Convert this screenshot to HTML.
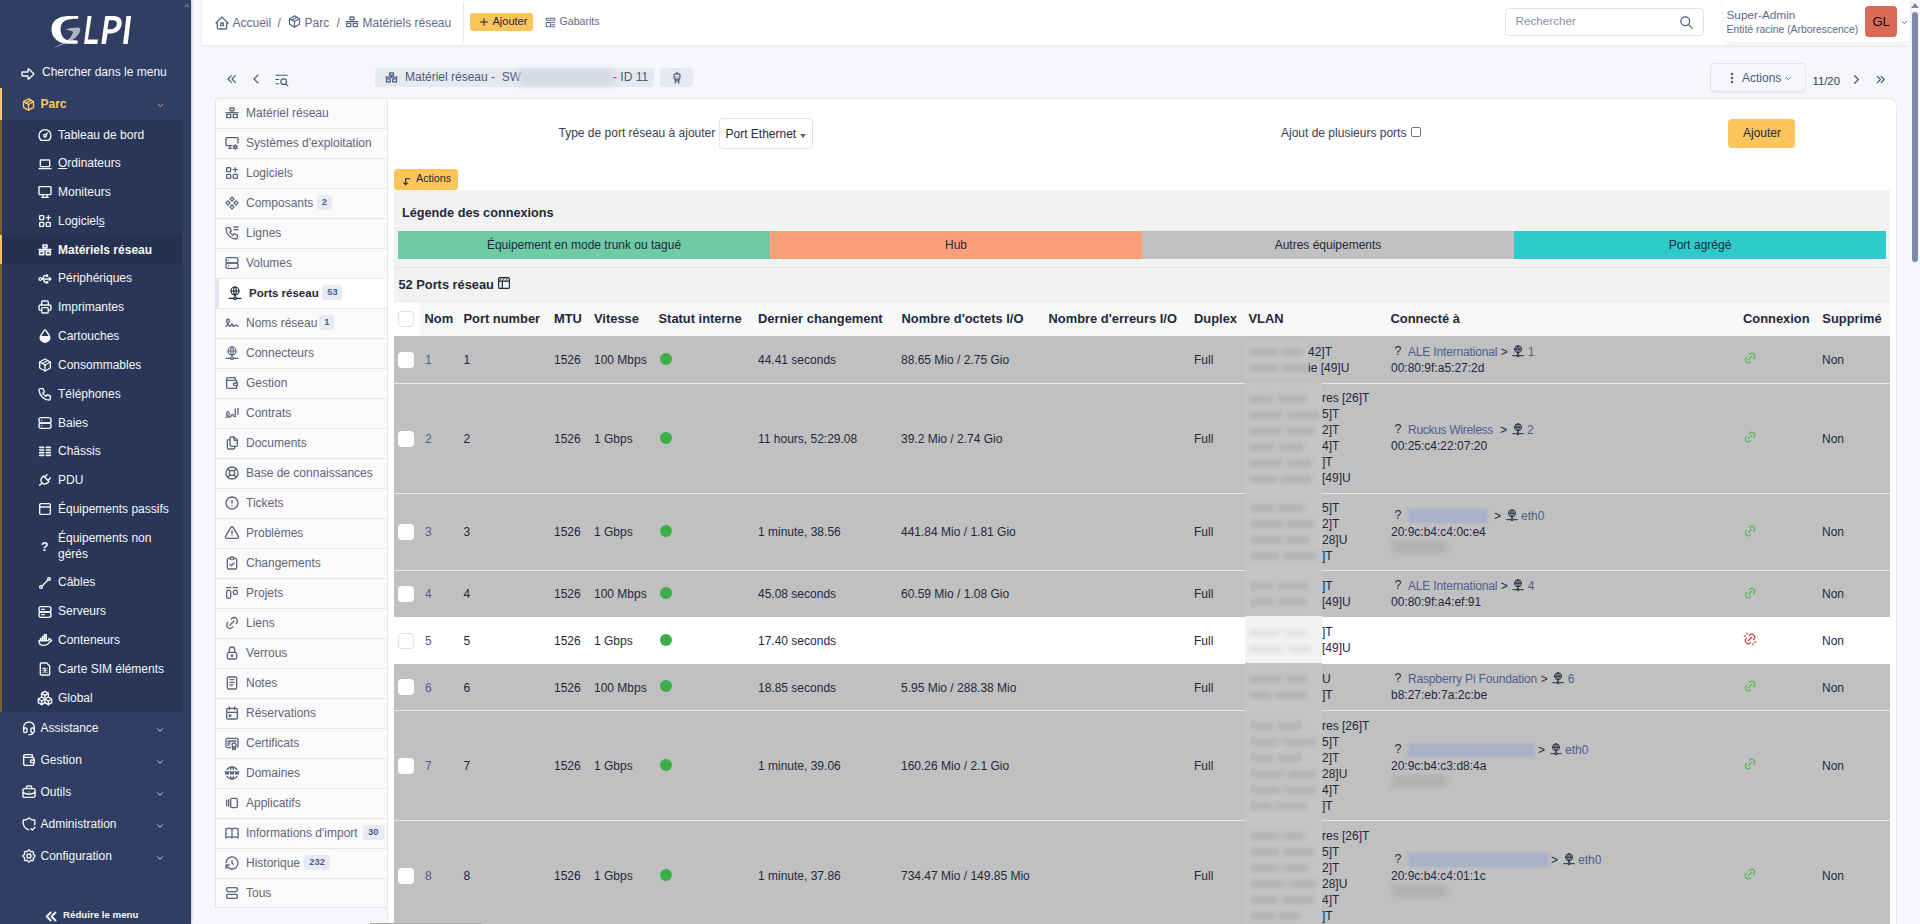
<!DOCTYPE html><html><head><meta charset="utf-8"><style>
html,body{margin:0;padding:0;width:1920px;height:924px;overflow:hidden;background:#f5f7fb;font-family:"Liberation Sans",sans-serif}
.t{position:absolute;line-height:16px;white-space:nowrap}
.r{position:absolute}
.ic{position:absolute;overflow:visible}
</style></head><body>
<div class="r" style="left:0px;top:0px;width:191px;height:924px;background:#2f3e62;box-shadow:1px 0 2px rgba(30,41,59,.22)"></div>
<svg class="ic" style="left:0;top:0;width:191px;height:60px" viewBox="0 0 191 60">
<path d="M78.2 15.9 L78.2 18.8 C74 18.9 70.5 19.1 68.6 19.4 C64.5 20.2 61.8 22.5 61 25.5 C60.2 28.5 60.3 33 62.4 36.2 C63.8 38.5 65.5 39.6 68 40.1 C70 40.4 74 40.4 77.6 40.4 L77.6 43.7 L66 43.7 C61 43.3 57 41.5 54.2 37.5 C51.2 33.5 50.5 27.5 53 23 C56 18 62 16.2 68 16 C71 15.9 75 15.9 78.2 15.9 Z" fill="#fff"/>
<path d="M64.9 29.7 C69 28.3 74.5 27.5 78.5 27.6 C80.3 28 80.6 29.8 80 31.5 C78.5 35 75 38.3 72.3 40.1 L67.8 40.1 C70 38 72.3 35 73.1 32.2 C72.5 30.8 68.5 30 64.9 29.7 Z" fill="#adb4c4"/>
<path d="M53.3 48.6 C57 46.5 61 44.5 65.5 43.4 L62.5 43.4 C59.5 44.5 56 46.5 53.3 48.6 Z" fill="#c5cad6"/>
<path d="M87.6 15.9 L91.6 15.9 L87.9 39.5 L97.9 39.5 L97.2 44 L84.1 44 Z" fill="#fff"/>
<path fill-rule="evenodd" d="M105.3 15.9 L113.5 15.9 C120 15.9 122.5 19.5 121.6 24.5 C120.6 30.5 116 33.6 109.5 33.6 L107.6 33.6 L105.9 44 L101.3 44 Z M108.9 20.2 L107.4 29.2 L110 29.2 C114 29.2 116.3 27.5 116.8 24.5 C117.3 21.5 115.5 20.2 112.5 20.2 Z" fill="#fff"/>
<path d="M126.5 15.9 L131.1 15.9 L127.7 44 L123.1 44 Z" fill="#fff"/>
</svg>
<svg class="ic" style="left:184px;top:3px;width:6px;height:4px" viewBox="0 0 6 4"><path d="M3 0L6 4H0z" fill="#5b6a8c"/></svg>
<svg class="ic" style="left:20.3px;top:65.5px;width:16px;height:16px;color:#f4f6fa" viewBox="0 0 24 24" fill="none" stroke="currentColor" stroke-width="2.1" stroke-linecap="round" stroke-linejoin="round"><path d="M4 9h8v-3.586a1 1 0 0 1 1.707 -.707l6.586 6.586a1 1 0 0 1 0 1.414l-6.586 6.586a1 1 0 0 1 -1.707 -.707v-3.586h-8a1 1 0 0 1 -1 -1v-4a1 1 0 0 1 1 -1z"/></svg>
<div class="t" style="left:42px;top:64px;font-size:12px;font-weight:400;color:#f4f6fa;">Chercher dans le menu</div>
<div class="r" style="left:0px;top:88px;width:2px;height:32px;background:#fec95c;"></div>
<svg class="ic" style="left:20.8px;top:96.8px;width:15px;height:15px;color:#fec95c" viewBox="0 0 24 24" fill="none" stroke="currentColor" stroke-width="2.2" stroke-linecap="round" stroke-linejoin="round"><path d="M12 3l8 4.5l0 9l-8 4.5l-8 -4.5l0 -9l8 -4.5"/><path d="M12 12l8 -4.5"/><path d="M12 12l0 9"/><path d="M12 12l-8 -4.5"/><path d="M16 5.25l-8 4.5"/></svg>
<div class="t" style="left:40.5px;top:96px;font-size:12px;font-weight:700;color:#fec95c;">Parc</div>
<svg class="ic" style="left:155.5px;top:100.5px;width:9px;height:9px;color:#fec95c" viewBox="0 0 24 24" fill="none" stroke="currentColor" stroke-width="2.2" stroke-linecap="round" stroke-linejoin="round"><path d="M6 9l6 6l6 -6"/></svg>
<div class="r" style="left:2px;top:120px;width:180px;height:592px;background:#2a3657;"></div>
<div class="r" style="left:0px;top:120px;width:2px;height:592px;background:#76602f;"></div>
<div class="r" style="left:2px;top:235px;width:180px;height:29px;background:#263150;"></div>
<div class="r" style="left:0px;top:235px;width:2px;height:29px;background:#f4c264;"></div>
<svg class="ic" style="left:36.5px;top:127.0px;width:16px;height:16px;color:#f4f6fa" viewBox="0 0 24 24" fill="none" stroke="currentColor" stroke-width="2.1" stroke-linecap="round" stroke-linejoin="round"><path d="M12 13m-2 0a2 2 0 1 0 4 0a2 2 0 1 0 -4 0"/><path d="M13.45 11.55l2.05 -2.05"/><path d="M6.4 20a9 9 0 1 1 11.2 0z"/></svg>
<div class="t" style="left:58px;top:127px;font-size:12px;font-weight:400;color:#f4f6fa;">Tableau de bord</div>
<svg class="ic" style="left:36.5px;top:155.7px;width:16px;height:16px;color:#f4f6fa" viewBox="0 0 24 24" fill="none" stroke="currentColor" stroke-width="2.1" stroke-linecap="round" stroke-linejoin="round"><path d="M3 19l18 0"/><path d="M5 7a1 1 0 0 1 1 -1h12a1 1 0 0 1 1 1v8a1 1 0 0 1 -1 1h-12a1 1 0 0 1 -1 -1z"/></svg>
<div class="t" style="left:58px;top:155px;font-size:12px;font-weight:400;color:#f4f6fa;"><u>O</u>rdinateurs</div>
<svg class="ic" style="left:36.5px;top:184.4px;width:16px;height:16px;color:#f4f6fa" viewBox="0 0 24 24" fill="none" stroke="currentColor" stroke-width="2.1" stroke-linecap="round" stroke-linejoin="round"><path d="M3 5a1 1 0 0 1 1 -1h16a1 1 0 0 1 1 1v10a1 1 0 0 1 -1 1h-16a1 1 0 0 1 -1 -1v-10z"/><path d="M7 20h10"/><path d="M9 16v4"/><path d="M15 16v4"/></svg>
<div class="t" style="left:58px;top:184px;font-size:12px;font-weight:400;color:#f4f6fa;">Moniteurs</div>
<svg class="ic" style="left:36.5px;top:213.1px;width:16px;height:16px;color:#f4f6fa" viewBox="0 0 24 24" fill="none" stroke="currentColor" stroke-width="2.1" stroke-linecap="round" stroke-linejoin="round"><path d="M4 5a1 1 0 0 1 1 -1h4a1 1 0 0 1 1 1v4a1 1 0 0 1 -1 1h-4a1 1 0 0 1 -1 -1z"/><path d="M4 15a1 1 0 0 1 1 -1h4a1 1 0 0 1 1 1v4a1 1 0 0 1 -1 1h-4a1 1 0 0 1 -1 -1z"/><path d="M14 15a1 1 0 0 1 1 -1h4a1 1 0 0 1 1 1v4a1 1 0 0 1 -1 1h-4a1 1 0 0 1 -1 -1z"/><path d="M14 7l6 0"/><path d="M17 4l0 6"/></svg>
<div class="t" style="left:58px;top:213px;font-size:12px;font-weight:400;color:#f4f6fa;">Logiciel<u>s</u></div>
<svg class="ic" style="left:36.5px;top:242.1px;width:16px;height:16px;color:#f4f6fa" viewBox="0 0 24 24" fill="none" stroke="currentColor" stroke-width="2.4" stroke-linecap="round" stroke-linejoin="round"><path d="M9 4.5h6v4h-6z"/><path d="M12 8.5v3"/><path d="M3 11.5h18"/><path d="M4 14h6v5h-6z"/><path d="M14 14h6v5h-6z"/></svg>
<div class="t" style="left:58px;top:242px;font-size:12px;font-weight:700;color:#f4f6fa;">Matériels réseau</div>
<svg class="ic" style="left:36.5px;top:270.8px;width:16px;height:16px;color:#f4f6fa" viewBox="0 0 24 24" fill="none" stroke="currentColor" stroke-width="2.1" stroke-linecap="round" stroke-linejoin="round"><g transform="rotate(90 12 12)"><path d="M12 19m-2 0a2 2 0 1 0 4 0a2 2 0 1 0 -4 0"/><path d="M12 17v-11.5"/><path d="M7 10v3l5 3"/><path d="M12 14.5l5 -2v-2.5"/><path d="M16 10h2v-2h-2z"/><path d="M7 9m-1 0a1 1 0 1 0 2 0a1 1 0 1 0 -2 0"/><path d="M10 5.5h4l-2 -2.5z"/></g></svg>
<div class="t" style="left:58px;top:270px;font-size:12px;font-weight:400;color:#f4f6fa;">Périphériques</div>
<svg class="ic" style="left:36.5px;top:299.4px;width:16px;height:16px;color:#f4f6fa" viewBox="0 0 24 24" fill="none" stroke="currentColor" stroke-width="2.1" stroke-linecap="round" stroke-linejoin="round"><path d="M17 17h2a2 2 0 0 0 2 -2v-4a2 2 0 0 0 -2 -2h-14a2 2 0 0 0 -2 2v4a2 2 0 0 0 2 2h2"/><path d="M17 9v-4a2 2 0 0 0 -2 -2h-6a2 2 0 0 0 -2 2v4"/><path d="M7 15a2 2 0 0 1 2 -2h6a2 2 0 0 1 2 2v4a2 2 0 0 1 -2 2h-6a2 2 0 0 1 -2 -2z"/></svg>
<div class="t" style="left:58px;top:299px;font-size:12px;font-weight:400;color:#f4f6fa;">Imprimantes</div>
<svg class="ic" style="left:36.5px;top:328.3px;width:16px;height:16px;color:#f4f6fa" viewBox="0 0 24 24" fill="none" stroke="currentColor" stroke-width="2.1" stroke-linecap="round" stroke-linejoin="round"><path d="M7.502 19.423c2.602 2.105 6.395 2.105 8.996 0c2.602 -2.105 3.262 -5.708 1.566 -8.546l-4.89 -7.26c-.42 -.625 -1.287 -.803 -1.936 -.397a1.376 1.376 0 0 0 -.41 .397l-4.893 7.26c-1.695 2.838 -1.035 6.441 1.567 8.546z"/><path d="M5.5 13h13c.3 3 -1.5 7 -6.5 7.5c-5 -.5 -6.8 -4.5 -6.5 -7.5z" fill="currentColor"/></svg>
<div class="t" style="left:58px;top:328px;font-size:12px;font-weight:400;color:#f4f6fa;">Cartouches</div>
<svg class="ic" style="left:36.5px;top:357.2px;width:16px;height:16px;color:#f4f6fa" viewBox="0 0 24 24" fill="none" stroke="currentColor" stroke-width="2.1" stroke-linecap="round" stroke-linejoin="round"><path d="M12 3l8 4.5l0 9l-8 4.5l-8 -4.5l0 -9l8 -4.5"/><path d="M12 12l8 -4.5"/><path d="M12 12l0 9"/><path d="M12 12l-8 -4.5"/><path d="M16 5.25l-8 4.5"/></svg>
<div class="t" style="left:58px;top:357px;font-size:12px;font-weight:400;color:#f4f6fa;">Consommables</div>
<svg class="ic" style="left:36.5px;top:386.1px;width:16px;height:16px;color:#f4f6fa" viewBox="0 0 24 24" fill="none" stroke="currentColor" stroke-width="2.1" stroke-linecap="round" stroke-linejoin="round"><path d="M5 4h4l2 5l-2.5 1.5a11 11 0 0 0 5 5l1.5 -2.5l5 2v4a2 2 0 0 1 -2 2a16 16 0 0 1 -15 -15a2 2 0 0 1 2 -2"/></svg>
<div class="t" style="left:58px;top:386px;font-size:12px;font-weight:400;color:#f4f6fa;">Téléphones</div>
<svg class="ic" style="left:36.5px;top:415.0px;width:16px;height:16px;color:#f4f6fa" viewBox="0 0 24 24" fill="none" stroke="currentColor" stroke-width="2.1" stroke-linecap="round" stroke-linejoin="round"><path d="M3 7a3 3 0 0 1 3 -3h12a3 3 0 0 1 3 3v2a3 3 0 0 1 -3 3h-12a3 3 0 0 1 -3 -3z"/><path d="M3 15a3 3 0 0 1 3 -3h12a3 3 0 0 1 3 3v2a3 3 0 0 1 -3 3h-12a3 3 0 0 1 -3 -3z"/><path d="M7 8l0 .01"/><path d="M7 16l0 .01"/></svg>
<div class="t" style="left:58px;top:415px;font-size:12px;font-weight:400;color:#f4f6fa;">Baies</div>
<svg class="ic" style="left:36.5px;top:443.6px;width:16px;height:16px;color:#f4f6fa" viewBox="0 0 24 24" fill="none" stroke="currentColor" stroke-width="2.1" stroke-linecap="round" stroke-linejoin="round"><path d="M4 5h6M4 9h6M4 13h6M4 17h6M14 5h6M14 9h6M14 13h6M14 17h6" stroke-width="2.5"/></svg>
<div class="t" style="left:58px;top:443px;font-size:12px;font-weight:400;color:#f4f6fa;">Châssis</div>
<svg class="ic" style="left:36.5px;top:472.4px;width:16px;height:16px;color:#f4f6fa" viewBox="0 0 24 24" fill="none" stroke="currentColor" stroke-width="2.1" stroke-linecap="round" stroke-linejoin="round"><path d="M9.785 6l8.215 8.215l-2.054 2.054a5.81 5.81 0 1 1 -8.215 -8.215l2.054 -2.054z"/><path d="M4 20l3.5 -3.5"/><path d="M15 4l-3.5 3.5"/><path d="M20 9l-3.5 3.5"/></svg>
<div class="t" style="left:58px;top:472px;font-size:12px;font-weight:400;color:#f4f6fa;">PDU</div>
<svg class="ic" style="left:36.5px;top:501.29999999999995px;width:16px;height:16px;color:#f4f6fa" viewBox="0 0 24 24" fill="none" stroke="currentColor" stroke-width="2.1" stroke-linecap="round" stroke-linejoin="round"><path d="M4 6a2 2 0 0 1 2 -2h12a2 2 0 0 1 2 2v12a2 2 0 0 1 -2 2h-12a2 2 0 0 1 -2 -2z"/><path d="M4 9h16"/></svg>
<div class="t" style="left:58px;top:501px;font-size:12px;font-weight:400;color:#f4f6fa;">Équipements passifs</div>
<div class="t" style="left:41px;top:539px;font-size:12px;font-weight:700;color:#f4f6fa;">?</div>
<div class="t" style="left:58px;top:530px;font-size:12px;font-weight:400;color:#f4f6fa;">Équipements non</div>
<div class="t" style="left:58px;top:546px;font-size:12px;font-weight:400;color:#f4f6fa;">gérés</div>
<svg class="ic" style="left:36.5px;top:574.6px;width:16px;height:16px;color:#f4f6fa" viewBox="0 0 24 24" fill="none" stroke="currentColor" stroke-width="2.1" stroke-linecap="round" stroke-linejoin="round"><path d="M6 18m-2 0a2 2 0 1 0 4 0a2 2 0 1 0 -4 0"/><path d="M18 6m-2 0a2 2 0 1 0 4 0a2 2 0 1 0 -4 0"/><path d="M7.5 16.5l9 -9"/></svg>
<div class="t" style="left:58px;top:574px;font-size:12px;font-weight:400;color:#f4f6fa;">Câbles</div>
<svg class="ic" style="left:36.5px;top:603.5px;width:16px;height:16px;color:#f4f6fa" viewBox="0 0 24 24" fill="none" stroke="currentColor" stroke-width="2.1" stroke-linecap="round" stroke-linejoin="round"><path d="M3 7a3 3 0 0 1 3 -3h12a3 3 0 0 1 3 3v2a3 3 0 0 1 -3 3h-12a3 3 0 0 1 -3 -3z"/><path d="M3 15a3 3 0 0 1 3 -3h12a3 3 0 0 1 3 3v2a3 3 0 0 1 -3 3h-12a3 3 0 0 1 -3 -3z"/><path d="M7 8h4"/><path d="M7 16h4"/></svg>
<div class="t" style="left:58px;top:603px;font-size:12px;font-weight:400;color:#f4f6fa;">Serveurs</div>
<svg class="ic" style="left:36.5px;top:632.4px;width:16px;height:16px;color:#f4f6fa" viewBox="0 0 24 24" fill="none" stroke="currentColor" stroke-width="2.1" stroke-linecap="round" stroke-linejoin="round"><path d="M22 12.54c-1.804 -.345 -2.701 -1.08 -3.523 -2.94c-.487 .696 -1.102 1.568 -.92 2.4c.028 .238 -.32 1 -.557 1h-14c0 5.208 3.164 7 6.196 7c4.124 .022 7.828 -1.376 9.854 -5c1.146 -.101 2.296 -1.505 2.95 -2.46z"/><path d="M5 10h3v3h-3z"/><path d="M8 10h3v3h-3z"/><path d="M11 10h3v3h-3z"/><path d="M8 7h3v3h-3z"/><path d="M11 7h3v3h-3z"/><path d="M11 4h3v3h-3z"/></svg>
<div class="t" style="left:58px;top:632px;font-size:12px;font-weight:400;color:#f4f6fa;">Conteneurs</div>
<svg class="ic" style="left:36.5px;top:661.3px;width:16px;height:16px;color:#f4f6fa" viewBox="0 0 24 24" fill="none" stroke="currentColor" stroke-width="2.1" stroke-linecap="round" stroke-linejoin="round"><path d="M6 3h8.5l4.5 4.5v12.5a1 1 0 0 1 -1 1h-12a1 1 0 0 1 -1 -1v-16a1 1 0 0 1 1 -1z"/><path d="M9 11h3v6"/><path d="M15 17v.01"/><path d="M15 14v.01"/><path d="M15 11v.01"/><path d="M12 14v.01"/><path d="M9 14v.01"/><path d="M9 17v.01"/></svg>
<div class="t" style="left:58px;top:661px;font-size:12px;font-weight:400;color:#f4f6fa;">Carte SIM éléments</div>
<svg class="ic" style="left:36.5px;top:690.1px;width:16px;height:16px;color:#f4f6fa" viewBox="0 0 24 24" fill="none" stroke="currentColor" stroke-width="2.1" stroke-linecap="round" stroke-linejoin="round"><path d="M7 16.5l-5 -3l5 -3l5 3v5.5l-5 3z"/><path d="M2 13.5v5.5l5 3"/><path d="M7 16.545l5 -3.03"/><path d="M17 16.5l-5 -3l5 -3l5 3v5.5l-5 3z"/><path d="M12 19l5 3"/><path d="M17 16.5l5 -3"/><path d="M12 13.5v-5.5l-5 -3l5 -3l5 3v5.5"/><path d="M7 5.03v5.455"/><path d="M12 8l5 -3"/></svg>
<div class="t" style="left:58px;top:690px;font-size:12px;font-weight:400;color:#f4f6fa;">Global</div>
<svg class="ic" style="left:20.5px;top:720.0px;width:16px;height:16px;color:#f4f6fa" viewBox="0 0 24 24" fill="none" stroke="currentColor" stroke-width="2.1" stroke-linecap="round" stroke-linejoin="round"><path d="M4 14v-3a8 8 0 1 1 16 0v3"/><path d="M18 19c0 1.657 -2.686 3 -6 3"/><path d="M4 14a2 2 0 0 1 2 -2h1a2 2 0 0 1 2 2v3a2 2 0 0 1 -2 2h-1a2 2 0 0 1 -2 -2v-3z"/><path d="M15 14a2 2 0 0 1 2 -2h1a2 2 0 0 1 2 2v3a2 2 0 0 1 -2 2h-1a2 2 0 0 1 -2 -2v-3z"/></svg>
<div class="t" style="left:40.5px;top:720px;font-size:12px;font-weight:400;color:#f4f6fa;">Assistance</div>
<svg class="ic" style="left:155.0px;top:724.5px;width:10px;height:10px;color:#f4f6fa" viewBox="0 0 24 24" fill="none" stroke="currentColor" stroke-width="2" stroke-linecap="round" stroke-linejoin="round"><path d="M6 9l6 6l6 -6"/></svg>
<svg class="ic" style="left:20.5px;top:752.0px;width:16px;height:16px;color:#f4f6fa" viewBox="0 0 24 24" fill="none" stroke="currentColor" stroke-width="2.1" stroke-linecap="round" stroke-linejoin="round"><path d="M17 8v-3a1 1 0 0 0 -1 -1h-10a2 2 0 0 0 0 4h12a1 1 0 0 1 1 1v3m0 4v3a1 1 0 0 1 -1 1h-12a2 2 0 0 1 -2 -2v-12"/><path d="M20 12v4h-4a2 2 0 0 1 0 -4h4"/></svg>
<div class="t" style="left:40.5px;top:752px;font-size:12px;font-weight:400;color:#f4f6fa;">Gestion</div>
<svg class="ic" style="left:155.0px;top:756.5px;width:10px;height:10px;color:#f4f6fa" viewBox="0 0 24 24" fill="none" stroke="currentColor" stroke-width="2" stroke-linecap="round" stroke-linejoin="round"><path d="M6 9l6 6l6 -6"/></svg>
<svg class="ic" style="left:20.5px;top:784.0px;width:16px;height:16px;color:#f4f6fa" viewBox="0 0 24 24" fill="none" stroke="currentColor" stroke-width="2.1" stroke-linecap="round" stroke-linejoin="round"><path d="M3 9a2 2 0 0 1 2 -2h14a2 2 0 0 1 2 2v9a2 2 0 0 1 -2 2h-14a2 2 0 0 1 -2 -2z"/><path d="M8 7v-2a2 2 0 0 1 2 -2h4a2 2 0 0 1 2 2v2"/><path d="M12 12l0 .01"/><path d="M3 13a20 20 0 0 0 18 0"/></svg>
<div class="t" style="left:40.5px;top:784px;font-size:12px;font-weight:400;color:#f4f6fa;">Outils</div>
<svg class="ic" style="left:155.0px;top:788.5px;width:10px;height:10px;color:#f4f6fa" viewBox="0 0 24 24" fill="none" stroke="currentColor" stroke-width="2" stroke-linecap="round" stroke-linejoin="round"><path d="M6 9l6 6l6 -6"/></svg>
<svg class="ic" style="left:20.5px;top:816.0px;width:16px;height:16px;color:#f4f6fa" viewBox="0 0 24 24" fill="none" stroke="currentColor" stroke-width="2.1" stroke-linecap="round" stroke-linejoin="round"><path d="M11.46 20.846a12 12 0 0 1 -7.96 -14.846a12 12 0 0 0 8.5 -3a12 12 0 0 0 8.5 3a12 12 0 0 1 -.09 7.06"/><path d="M15 19l2 2l4 -4"/></svg>
<div class="t" style="left:40.5px;top:816px;font-size:12px;font-weight:400;color:#f4f6fa;">Administration</div>
<svg class="ic" style="left:155.0px;top:820.5px;width:10px;height:10px;color:#f4f6fa" viewBox="0 0 24 24" fill="none" stroke="currentColor" stroke-width="2" stroke-linecap="round" stroke-linejoin="round"><path d="M6 9l6 6l6 -6"/></svg>
<svg class="ic" style="left:20.5px;top:848.0px;width:16px;height:16px;color:#f4f6fa" viewBox="0 0 24 24" fill="none" stroke="currentColor" stroke-width="2.1" stroke-linecap="round" stroke-linejoin="round"><path d="M10.325 4.317c.426 -1.756 2.924 -1.756 3.35 0a1.724 1.724 0 0 0 2.573 1.066c1.543 -.94 3.31 .826 2.37 2.37a1.724 1.724 0 0 0 1.065 2.572c1.756 .426 1.756 2.924 0 3.35a1.724 1.724 0 0 0 -1.066 2.573c.94 1.543 -.826 3.31 -2.37 2.37a1.724 1.724 0 0 0 -2.572 1.065c-.426 1.756 -2.924 1.756 -3.35 0a1.724 1.724 0 0 0 -2.573 -1.066c-1.543 .94 -3.31 -.826 -2.37 -2.37a1.724 1.724 0 0 0 -1.065 -2.572c-1.756 -.426 -1.756 -2.924 0 -3.35a1.724 1.724 0 0 0 1.066 -2.573c-.94 -1.543 .826 -3.31 2.37 -2.37c1 .608 2.296 .07 2.572 -1.065z"/><path d="M9 12a3 3 0 1 0 6 0a3 3 0 0 0 -6 0"/></svg>
<div class="t" style="left:40.5px;top:848px;font-size:12px;font-weight:400;color:#f4f6fa;">Configuration</div>
<svg class="ic" style="left:155.0px;top:852.5px;width:10px;height:10px;color:#f4f6fa" viewBox="0 0 24 24" fill="none" stroke="currentColor" stroke-width="2" stroke-linecap="round" stroke-linejoin="round"><path d="M6 9l6 6l6 -6"/></svg>
<svg class="ic" style="left:42.3px;top:906.5px;width:19px;height:19px;color:#f4f6fa" viewBox="0 0 24 24" fill="none" stroke="currentColor" stroke-width="2.4" stroke-linecap="round" stroke-linejoin="round"><path d="M11 7l-5 5l5 5"/><path d="M17 7l-5 5l5 5"/></svg>
<div class="t" style="left:63px;top:907px;font-size:9.7px;font-weight:700;color:#f4f6fa;">Réduire le menu</div>
<div class="r" style="left:202px;top:0px;width:1708px;height:45px;background:#fff;box-shadow:0 1px 3px rgba(30,41,59,.08)"></div>
<svg class="ic" style="left:213.5px;top:14.5px;width:16px;height:16px;color:#5e6a89" viewBox="0 0 24 24" fill="none" stroke="currentColor" stroke-width="2" stroke-linecap="round" stroke-linejoin="round"><path d="M5 12l-2 0l9 -9l9 9l-2 0"/><path d="M5 12v7a2 2 0 0 0 2 2h10a2 2 0 0 0 2 -2v-7"/><path d="M10 12h4v4h-4z"/></svg>
<div class="t" style="left:232.5px;top:15px;font-size:12px;font-weight:400;color:#5e6a89;">Accueil</div>
<div class="t" style="left:277.5px;top:15px;font-size:12px;font-weight:400;color:#5e6a89;">/</div>
<svg class="ic" style="left:287.0px;top:14.0px;width:15px;height:15px;color:#5e6a89" viewBox="0 0 24 24" fill="none" stroke="currentColor" stroke-width="2" stroke-linecap="round" stroke-linejoin="round"><path d="M12 3l8 4.5l0 9l-8 4.5l-8 -4.5l0 -9l8 -4.5"/><path d="M12 12l8 -4.5"/><path d="M12 12l0 9"/><path d="M12 12l-8 -4.5"/><path d="M16 5.25l-8 4.5"/></svg>
<div class="t" style="left:304.5px;top:15px;font-size:12px;font-weight:400;color:#5e6a89;">Parc</div>
<div class="t" style="left:336.5px;top:15px;font-size:12px;font-weight:400;color:#5e6a89;">/</div>
<svg class="ic" style="left:344.0px;top:13.5px;width:16px;height:16px;color:#5e6a89" viewBox="0 0 24 24" fill="none" stroke="currentColor" stroke-width="2" stroke-linecap="round" stroke-linejoin="round"><path d="M9 4.5h6v4h-6z"/><path d="M12 8.5v3"/><path d="M3 11.5h18"/><path d="M4 14h6v5h-6z"/><path d="M14 14h6v5h-6z"/></svg>
<div class="t" style="left:362.5px;top:15px;font-size:12px;font-weight:400;color:#5e6a89;">Matériels réseau</div>
<div class="r" style="left:463px;top:3px;width:1px;height:39px;background:#e5e7eb;"></div>
<div class="r" style="left:470px;top:13px;width:63px;height:18px;background:#fac55a;border-radius:3px"></div>
<svg class="ic" style="left:477.5px;top:15.8px;width:12px;height:12px;color:#1e293b" viewBox="0 0 24 24" fill="none" stroke="currentColor" stroke-width="2" stroke-linecap="round" stroke-linejoin="round"><path d="M12 5l0 14"/><path d="M5 12l14 0"/></svg>
<div class="t" style="left:492.5px;top:13px;font-size:11px;font-weight:400;color:#1e293b;">Ajouter</div>
<svg class="ic" style="left:543.5px;top:15.5px;width:13px;height:13px;color:#5e6a89" viewBox="0 0 24 24" fill="none" stroke="currentColor" stroke-width="1.9" stroke-linecap="round" stroke-linejoin="round"><path d="M4 5a1 1 0 0 1 1 -1h14a1 1 0 0 1 1 1v2a1 1 0 0 1 -1 1h-14a1 1 0 0 1 -1 -1z"/><path d="M4 13a1 1 0 0 1 1 -1h6a1 1 0 0 1 1 1v6a1 1 0 0 1 -1 1h-6a1 1 0 0 1 -1 -1z"/><path d="M14 12l6 0"/><path d="M14 16l6 0"/><path d="M14 20l6 0"/></svg>
<div class="t" style="left:559.5px;top:13px;font-size:10.6px;font-weight:400;color:#5e6a89;">Gabarits</div>
<div class="r" style="left:1505px;top:8px;width:198px;height:27px;background:#fff;border:1px solid #dfe3ea;border-radius:4px;box-sizing:border-box;width:199px;height:28px"></div>
<div class="t" style="left:1515.5px;top:13px;font-size:11.7px;font-weight:400;color:#8791a7;">Rechercher</div>
<svg class="ic" style="left:1678.5px;top:15.0px;width:15px;height:15px;color:#4a5a80" viewBox="0 0 24 24" fill="none" stroke="currentColor" stroke-width="2" stroke-linecap="round" stroke-linejoin="round"><path d="M10 10m-7 0a7 7 0 1 0 14 0a7 7 0 1 0 -14 0"/><path d="M21 21l-6 -6"/></svg>
<div class="r" style="left:1723px;top:0px;width:187px;height:42px;background:#fff;border-radius:0 0 6px 6px;box-shadow:0 1px 3px rgba(30,41,59,.10)"></div>
<div class="t" style="left:1726.5px;top:7px;font-size:11.8px;font-weight:400;color:#5e6a89;">Super-Admin</div>
<div class="t" style="left:1726.5px;top:22px;font-size:10.4px;font-weight:400;color:#5e6a89;">Entité racine (Arborescence)</div>
<div class="r" style="left:1865px;top:6px;width:32px;height:31px;background:#da6a58;border-radius:4px"></div>
<div class="t" style="left:1872.5px;top:14px;font-size:13px;font-weight:400;color:#0d0d0d;">GL</div>
<svg class="ic" style="left:1899.5px;top:18.0px;width:9px;height:9px;color:#5e6a89" viewBox="0 0 24 24" fill="none" stroke="currentColor" stroke-width="2.6" stroke-linecap="round" stroke-linejoin="round"><path d="M6 9l6 6l6 -6"/></svg>
<svg class="ic" style="left:1910px;top:2px;width:10px;height:7px" viewBox="0 0 10 7"><path d="M5 1L9 6H1z" fill="#7a88a6"/></svg>
<div class="r" style="left:1912px;top:12px;width:6px;height:250px;background:#7d8aa7;border-radius:3px"></div>
<svg class="ic" style="left:223.5px;top:71.3px;width:16px;height:16px;color:#4a5a80" viewBox="0 0 24 24" fill="none" stroke="currentColor" stroke-width="1.7" stroke-linecap="round" stroke-linejoin="round"><path d="M11 7l-5 5l5 5"/><path d="M17 7l-5 5l5 5"/></svg>
<svg class="ic" style="left:248.3px;top:71.3px;width:16px;height:16px;color:#4a5a80" viewBox="0 0 24 24" fill="none" stroke="currentColor" stroke-width="1.7" stroke-linecap="round" stroke-linejoin="round"><path d="M15 6l-6 6l6 6"/></svg>
<svg class="ic" style="left:272.8px;top:70.8px;width:17px;height:17px;color:#4a5a80" viewBox="0 0 24 24" fill="none" stroke="currentColor" stroke-width="1.7" stroke-linecap="round" stroke-linejoin="round"><path d="M15 15m-4 0a4 4 0 1 0 8 0a4 4 0 1 0 -8 0"/><path d="M18.5 18.5l2.5 2.5"/><path d="M4 6h16"/><path d="M4 12h4"/><path d="M4 18h4"/></svg>
<div class="r" style="left:375px;top:68px;width:279px;height:19px;background:#e6e9f0;border-radius:4px"></div>
<svg class="ic" style="left:384.0px;top:69.5px;width:15px;height:15px;color:#4a5a80" viewBox="0 0 24 24" fill="none" stroke="currentColor" stroke-width="2" stroke-linecap="round" stroke-linejoin="round"><path d="M9 4.5h6v4h-6z"/><path d="M12 8.5v3"/><path d="M3 11.5h18"/><path d="M4 14h6v5h-6z"/><path d="M14 14h6v5h-6z"/></svg>
<div class="t" style="left:405px;top:69px;font-size:12px;font-weight:400;color:#4a5a80;">Matériel réseau -&nbsp;&nbsp;SW</div>
<div class="r" style="left:519px;top:69px;width:94px;height:17px;background:#d6dae4;filter:blur(3px)"></div>
<div class="t" style="left:613px;top:69px;font-size:12px;font-weight:400;color:#4a5a80;">- ID 11</div>
<div class="r" style="left:660px;top:68px;width:33px;height:19px;background:#e6e9f0;border-radius:4px"></div>
<svg class="ic" style="left:669.5px;top:70.5px;width:14px;height:14px;color:#4a5a80" viewBox="0 0 24 24" fill="none" stroke="currentColor" stroke-width="2" stroke-linecap="round" stroke-linejoin="round"><path d="M7 7a2 2 0 0 1 2 -2h6a2 2 0 0 1 2 2v5a2 2 0 0 1 -2 2h-6a2 2 0 0 1 -2 -2z"/><path d="M10 10h.01"/><path d="M14 10h.01"/><path d="M12 2v3"/><path d="M9 14v7"/><path d="M15 14v7"/><path d="M9 17h6"/></svg>
<div class="r" style="left:1710px;top:63px;width:96px;height:29px;background:#f5f7fb;border:1px solid #e0e4ea;border-radius:4px;box-sizing:border-box;box-shadow:0 1px 1px rgba(0,0,0,.04)"></div>
<svg class="ic" style="left:1725.0px;top:70.5px;width:14px;height:14px;color:#4a5a80" viewBox="0 0 24 24" fill="none" stroke="currentColor" stroke-width="2.4" stroke-linecap="round" stroke-linejoin="round"><path d="M12 12m-1 0a1 1 0 1 0 2 0a1 1 0 1 0 -2 0"/><path d="M12 19m-1 0a1 1 0 1 0 2 0a1 1 0 1 0 -2 0"/><path d="M12 5m-1 0a1 1 0 1 0 2 0a1 1 0 1 0 -2 0"/></svg>
<div class="t" style="left:1742px;top:70px;font-size:12px;font-weight:400;color:#4a5a80;">Actions</div>
<svg class="ic" style="left:1783.5px;top:74.0px;width:9px;height:9px;color:#4a5a80" viewBox="0 0 24 24" fill="none" stroke="currentColor" stroke-width="2.2" stroke-linecap="round" stroke-linejoin="round"><path d="M6 9l6 6l6 -6"/></svg>
<div class="t" style="left:1812.5px;top:73px;font-size:11.3px;font-weight:400;color:#334155;">11/20</div>
<svg class="ic" style="left:1848.5px;top:72.0px;width:15px;height:15px;color:#4a5a80" viewBox="0 0 24 24" fill="none" stroke="currentColor" stroke-width="2" stroke-linecap="round" stroke-linejoin="round"><path d="M9 6l6 6l-6 6"/></svg>
<svg class="ic" style="left:1873.0px;top:72.0px;width:15px;height:15px;color:#4a5a80" viewBox="0 0 24 24" fill="none" stroke="currentColor" stroke-width="2" stroke-linecap="round" stroke-linejoin="round"><path d="M7 7l5 5l-5 5"/><path d="M13 7l5 5l-5 5"/></svg>
<div class="r" style="left:215px;top:98px;width:173px;height:810px;background:#fafafa;border:1px solid #e4e6eb;border-right:none;border-radius:4px 0 0 0;box-sizing:border-box"></div>
<svg class="ic" style="left:224.0px;top:105.0px;width:16px;height:16px;color:#5f6678" viewBox="0 0 24 24" fill="none" stroke="currentColor" stroke-width="2" stroke-linecap="round" stroke-linejoin="round"><path d="M9 4.5h6v4h-6z"/><path d="M12 8.5v3"/><path d="M3 11.5h18"/><path d="M4 14h6v5h-6z"/><path d="M14 14h6v5h-6z"/></svg>
<div class="t" style="left:246px;top:105px;font-size:12px;font-weight:400;color:#5f6678;">Matériel réseau</div>
<div class="r" style="left:216px;top:128px;width:172px;height:1px;background:#e4e6eb;"></div>
<svg class="ic" style="left:224.0px;top:135.0px;width:16px;height:16px;color:#5f6678" viewBox="0 0 24 24" fill="none" stroke="currentColor" stroke-width="2" stroke-linecap="round" stroke-linejoin="round"><path d="M12 16h-8a1 1 0 0 1 -1 -1v-10a1 1 0 0 1 1 -1h16a1 1 0 0 1 1 1v7"/><path d="M7 20h4"/><path d="M9 16v4"/><path d="M17 18m-2 0a2 2 0 1 0 4 0a2 2 0 1 0 -4 0"/><path d="M17 14.5v1.5"/><path d="M17 20v1.5"/><path d="M20 16.5l-1.3 .75"/><path d="M15.3 19.25l-1.3 .75"/><path d="M14 16.5l1.3 .75"/><path d="M18.7 19.25l1.3 .75"/></svg>
<div class="t" style="left:246px;top:135px;font-size:12px;font-weight:400;color:#5f6678;">Systèmes d'exploitation</div>
<div class="r" style="left:216px;top:158px;width:172px;height:1px;background:#e4e6eb;"></div>
<svg class="ic" style="left:224.0px;top:165.0px;width:16px;height:16px;color:#5f6678" viewBox="0 0 24 24" fill="none" stroke="currentColor" stroke-width="2" stroke-linecap="round" stroke-linejoin="round"><path d="M4 5a1 1 0 0 1 1 -1h4a1 1 0 0 1 1 1v4a1 1 0 0 1 -1 1h-4a1 1 0 0 1 -1 -1z"/><path d="M4 15a1 1 0 0 1 1 -1h4a1 1 0 0 1 1 1v4a1 1 0 0 1 -1 1h-4a1 1 0 0 1 -1 -1z"/><path d="M14 15a1 1 0 0 1 1 -1h4a1 1 0 0 1 1 1v4a1 1 0 0 1 -1 1h-4a1 1 0 0 1 -1 -1z"/><path d="M14 7l6 0"/><path d="M17 4l0 6"/></svg>
<div class="t" style="left:246px;top:165px;font-size:12px;font-weight:400;color:#5f6678;">Logiciels</div>
<div class="r" style="left:216px;top:188px;width:172px;height:1px;background:#e4e6eb;"></div>
<svg class="ic" style="left:224.0px;top:195.0px;width:16px;height:16px;color:#5f6678" viewBox="0 0 24 24" fill="none" stroke="currentColor" stroke-width="2" stroke-linecap="round" stroke-linejoin="round"><path d="M3 12l3 3l3 -3l-3 -3z"/><path d="M15 12l3 3l3 -3l-3 -3z"/><path d="M9 6l3 3l3 -3l-3 -3z"/><path d="M9 18l3 3l3 -3l-3 -3z"/></svg>
<div class="t" style="left:246px;top:195px;font-size:12px;font-weight:400;color:#5f6678;">Composants</div>
<div class="r" style="left:317px;top:194.5px;width:14.699999999999989px;height:15.5px;background:#e8ebf2;border-radius:3px"></div>
<div class="t" style="left:317px;top:194px;font-size:9.3px;font-weight:700;color:#4b5d8c;width:14.699999999999989px;text-align:center">2</div>
<div class="r" style="left:216px;top:218px;width:172px;height:1px;background:#e4e6eb;"></div>
<svg class="ic" style="left:224.0px;top:225.0px;width:16px;height:16px;color:#5f6678" viewBox="0 0 24 24" fill="none" stroke="currentColor" stroke-width="2" stroke-linecap="round" stroke-linejoin="round"><path d="M5 4h4l2 5l-2.5 1.5a11 11 0 0 0 5 5l1.5 -2.5l5 2v4a2 2 0 0 1 -2 2a16 16 0 0 1 -15 -15a2 2 0 0 1 2 -2"/><path d="M15 7h6"/><path d="M15 3h6"/></svg>
<div class="t" style="left:246px;top:225px;font-size:12px;font-weight:400;color:#5f6678;">Lignes</div>
<div class="r" style="left:216px;top:248px;width:172px;height:1px;background:#e4e6eb;"></div>
<svg class="ic" style="left:224.0px;top:255.0px;width:16px;height:16px;color:#5f6678" viewBox="0 0 24 24" fill="none" stroke="currentColor" stroke-width="2" stroke-linecap="round" stroke-linejoin="round"><path d="M3 7a3 3 0 0 1 3 -3h12a3 3 0 0 1 3 3v2a3 3 0 0 1 -3 3h-12a3 3 0 0 1 -3 -3z"/><path d="M3 15a3 3 0 0 1 3 -3h12a3 3 0 0 1 3 3v2a3 3 0 0 1 -3 3h-12a3 3 0 0 1 -3 -3z"/><path d="M7 8l0 .01"/><path d="M7 16l0 .01"/></svg>
<div class="t" style="left:246px;top:255px;font-size:12px;font-weight:400;color:#5f6678;">Volumes</div>
<div class="r" style="left:216px;top:278px;width:172px;height:1px;background:#e4e6eb;"></div>
<div class="r" style="left:216px;top:279px;width:171px;height:29px;background:#fff;"></div>
<div class="r" style="left:216px;top:278px;width:3px;height:31px;background:#e3e6ec;"></div>
<svg class="ic" style="left:227.0px;top:285.0px;width:16px;height:16px;color:#1e293b" viewBox="0 0 24 24" fill="none" stroke="currentColor" stroke-width="1.7" stroke-linecap="round" stroke-linejoin="round"><path d="M6 9a6 6 0 1 0 12 0a6 6 0 0 0 -12 0"/><path d="M12 3c1.333 .333 2 2.333 2 6s-.667 5.667 -2 6"/><path d="M12 3c-1.333 .333 -2 2.333 -2 6s.667 5.667 2 6"/><path d="M6 9h12"/><path d="M3 20h7"/><path d="M14 20h7"/><path d="M10 20a2 2 0 1 0 4 0a2 2 0 0 0 -4 0"/><path d="M12 15v3"/></svg>
<div class="t" style="left:249px;top:285px;font-size:11.5px;font-weight:700;color:#1e293b;">Ports réseau</div>
<div class="r" style="left:322.3px;top:284.5px;width:20.19999999999999px;height:15.5px;background:#e8ebf2;border-radius:3px"></div>
<div class="t" style="left:322.3px;top:284px;font-size:9.3px;font-weight:700;color:#4b5d8c;width:20.19999999999999px;text-align:center">53</div>
<div class="r" style="left:216px;top:308px;width:172px;height:1px;background:#e4e6eb;"></div>
<svg class="ic" style="left:224.0px;top:315.0px;width:16px;height:16px;color:#5f6678" viewBox="0 0 24 24" fill="none" stroke="currentColor" stroke-width="2" stroke-linecap="round" stroke-linejoin="round"><path d="M3 17c3.333 -3.333 5 -6 5 -8c0 -3 -1 -3 -2 -3s-2.032 1.085 -2 3c.034 2.048 1.658 4.877 2.5 6c1.5 2 2.5 2.5 3.5 1l2 -3c.333 2.667 1.333 4 3 4c.53 0 2.639 -2 3 -2c.517 0 1.517 .667 3 2"/></svg>
<div class="t" style="left:246px;top:315px;font-size:12px;font-weight:400;color:#5f6678;">Noms réseau</div>
<div class="r" style="left:319.3px;top:314.5px;width:15.099999999999966px;height:15.5px;background:#e8ebf2;border-radius:3px"></div>
<div class="t" style="left:319.3px;top:314px;font-size:9.3px;font-weight:700;color:#4b5d8c;width:15.099999999999966px;text-align:center">1</div>
<div class="r" style="left:216px;top:338px;width:172px;height:1px;background:#e4e6eb;"></div>
<svg class="ic" style="left:224.0px;top:345.0px;width:16px;height:16px;color:#5f6678" viewBox="0 0 24 24" fill="none" stroke="currentColor" stroke-width="1.7" stroke-linecap="round" stroke-linejoin="round"><path d="M6 9a6 6 0 1 0 12 0a6 6 0 0 0 -12 0"/><path d="M12 3c1.333 .333 2 2.333 2 6s-.667 5.667 -2 6"/><path d="M12 3c-1.333 .333 -2 2.333 -2 6s.667 5.667 2 6"/><path d="M6 9h12"/><path d="M3 20h7"/><path d="M14 20h7"/><path d="M10 20a2 2 0 1 0 4 0a2 2 0 0 0 -4 0"/><path d="M12 15v3"/></svg>
<div class="t" style="left:246px;top:345px;font-size:12px;font-weight:400;color:#5f6678;">Connecteurs</div>
<div class="r" style="left:216px;top:368px;width:172px;height:1px;background:#e4e6eb;"></div>
<svg class="ic" style="left:224.0px;top:375.0px;width:16px;height:16px;color:#5f6678" viewBox="0 0 24 24" fill="none" stroke="currentColor" stroke-width="2" stroke-linecap="round" stroke-linejoin="round"><path d="M17 8v-3a1 1 0 0 0 -1 -1h-10a2 2 0 0 0 0 4h12a1 1 0 0 1 1 1v3m0 4v3a1 1 0 0 1 -1 1h-12a2 2 0 0 1 -2 -2v-12"/><path d="M20 12v4h-4a2 2 0 0 1 0 -4h4"/></svg>
<div class="t" style="left:246px;top:375px;font-size:12px;font-weight:400;color:#5f6678;">Gestion</div>
<div class="r" style="left:216px;top:398px;width:172px;height:1px;background:#e4e6eb;"></div>
<svg class="ic" style="left:224.0px;top:405.0px;width:16px;height:16px;color:#5f6678" viewBox="0 0 24 24" fill="none" stroke="currentColor" stroke-width="2" stroke-linecap="round" stroke-linejoin="round"><path d="M3 19c3.333 -2 5 -4 5 -6c0 -3 -1 -3 -2 -3s-2.032 1.085 -2 3c.034 3.562 2.755 5 4.5 5c2.5 0 2.5 -4 4 -4s1.5 3 3 3h2"/><path d="M17 6v9"/><path d="M21 5v9"/></svg>
<div class="t" style="left:246px;top:405px;font-size:12px;font-weight:400;color:#5f6678;">Contrats</div>
<div class="r" style="left:216px;top:428px;width:172px;height:1px;background:#e4e6eb;"></div>
<svg class="ic" style="left:224.0px;top:435.0px;width:16px;height:16px;color:#5f6678" viewBox="0 0 24 24" fill="none" stroke="currentColor" stroke-width="2" stroke-linecap="round" stroke-linejoin="round"><path d="M15 3v4a1 1 0 0 0 1 1h4"/><path d="M18 17h-7a2 2 0 0 1 -2 -2v-10a2 2 0 0 1 2 -2h4l5 5v7a2 2 0 0 1 -2 2z"/><path d="M16 17v2a2 2 0 0 1 -2 2h-7a2 2 0 0 1 -2 -2v-10a2 2 0 0 1 2 -2h2"/></svg>
<div class="t" style="left:246px;top:435px;font-size:12px;font-weight:400;color:#5f6678;">Documents</div>
<div class="r" style="left:216px;top:458px;width:172px;height:1px;background:#e4e6eb;"></div>
<svg class="ic" style="left:224.0px;top:465.0px;width:16px;height:16px;color:#5f6678" viewBox="0 0 24 24" fill="none" stroke="currentColor" stroke-width="2" stroke-linecap="round" stroke-linejoin="round"><path d="M12 12m-4 0a4 4 0 1 0 8 0a4 4 0 1 0 -8 0"/><path d="M12 12m-9 0a9 9 0 1 0 18 0a9 9 0 1 0 -18 0"/><path d="M15 15l3.35 3.35"/><path d="M9 15l-3.35 3.35"/><path d="M5.65 5.65l3.35 3.35"/><path d="M18.35 5.65l-3.35 3.35"/></svg>
<div class="t" style="left:246px;top:465px;font-size:12px;font-weight:400;color:#5f6678;">Base de connaissances</div>
<div class="r" style="left:216px;top:488px;width:172px;height:1px;background:#e4e6eb;"></div>
<svg class="ic" style="left:224.0px;top:495.0px;width:16px;height:16px;color:#5f6678" viewBox="0 0 24 24" fill="none" stroke="currentColor" stroke-width="2" stroke-linecap="round" stroke-linejoin="round"><path d="M3 12a9 9 0 1 0 18 0a9 9 0 0 0 -18 0"/><path d="M12 8v4"/><path d="M12 16h.01"/></svg>
<div class="t" style="left:246px;top:495px;font-size:12px;font-weight:400;color:#5f6678;">Tickets</div>
<div class="r" style="left:216px;top:518px;width:172px;height:1px;background:#e4e6eb;"></div>
<svg class="ic" style="left:224.0px;top:525.0px;width:16px;height:16px;color:#5f6678" viewBox="0 0 24 24" fill="none" stroke="currentColor" stroke-width="2" stroke-linecap="round" stroke-linejoin="round"><path d="M12 9v4"/><path d="M10.363 3.591l-8.106 13.534a1.914 1.914 0 0 0 1.636 2.871h16.214a1.914 1.914 0 0 0 1.636 -2.87l-8.106 -13.536a1.914 1.914 0 0 0 -3.274 0z"/><path d="M12 16h.01"/></svg>
<div class="t" style="left:246px;top:525px;font-size:12px;font-weight:400;color:#5f6678;">Problèmes</div>
<div class="r" style="left:216px;top:548px;width:172px;height:1px;background:#e4e6eb;"></div>
<svg class="ic" style="left:224.0px;top:555.0px;width:16px;height:16px;color:#5f6678" viewBox="0 0 24 24" fill="none" stroke="currentColor" stroke-width="2" stroke-linecap="round" stroke-linejoin="round"><path d="M9 5h-2a2 2 0 0 0 -2 2v12a2 2 0 0 0 2 2h10a2 2 0 0 0 2 -2v-12a2 2 0 0 0 -2 -2h-2"/><path d="M9 5a2 2 0 0 1 2 -2h2a2 2 0 0 1 2 2v0a2 2 0 0 1 -2 2h-2a2 2 0 0 1 -2 -2z"/><path d="M9 14l2 2l4 -4"/></svg>
<div class="t" style="left:246px;top:555px;font-size:12px;font-weight:400;color:#5f6678;">Changements</div>
<div class="r" style="left:216px;top:578px;width:172px;height:1px;background:#e4e6eb;"></div>
<svg class="ic" style="left:224.0px;top:585.0px;width:16px;height:16px;color:#5f6678" viewBox="0 0 24 24" fill="none" stroke="currentColor" stroke-width="2" stroke-linecap="round" stroke-linejoin="round"><path d="M4 4l6 0"/><path d="M14 4l6 0"/><path d="M4 10a2 2 0 0 1 2 -2h2a2 2 0 0 1 2 2v8a2 2 0 0 1 -2 2h-2a2 2 0 0 1 -2 -2z"/><path d="M14 10a2 2 0 0 1 2 -2h2a2 2 0 0 1 2 2v2a2 2 0 0 1 -2 2h-2a2 2 0 0 1 -2 -2z"/></svg>
<div class="t" style="left:246px;top:585px;font-size:12px;font-weight:400;color:#5f6678;">Projets</div>
<div class="r" style="left:216px;top:608px;width:172px;height:1px;background:#e4e6eb;"></div>
<svg class="ic" style="left:224.0px;top:615.0px;width:16px;height:16px;color:#5f6678" viewBox="0 0 24 24" fill="none" stroke="currentColor" stroke-width="2" stroke-linecap="round" stroke-linejoin="round"><path d="M9 15l6 -6"/><path d="M11 6l.463 -.536a5 5 0 0 1 7.071 7.072l-.534 .464"/><path d="M13 18l-.397 .534a5.068 5.068 0 0 1 -7.127 0a4.972 4.972 0 0 1 0 -7.071l.524 -.463"/></svg>
<div class="t" style="left:246px;top:615px;font-size:12px;font-weight:400;color:#5f6678;">Liens</div>
<div class="r" style="left:216px;top:638px;width:172px;height:1px;background:#e4e6eb;"></div>
<svg class="ic" style="left:224.0px;top:645.0px;width:16px;height:16px;color:#5f6678" viewBox="0 0 24 24" fill="none" stroke="currentColor" stroke-width="2" stroke-linecap="round" stroke-linejoin="round"><path d="M5 13a2 2 0 0 1 2 -2h10a2 2 0 0 1 2 2v6a2 2 0 0 1 -2 2h-10a2 2 0 0 1 -2 -2v-6z"/><path d="M11 16a1 1 0 1 0 2 0a1 1 0 0 0 -2 0"/><path d="M8 11v-4a4 4 0 1 1 8 0v4"/></svg>
<div class="t" style="left:246px;top:645px;font-size:12px;font-weight:400;color:#5f6678;">Verrous</div>
<div class="r" style="left:216px;top:668px;width:172px;height:1px;background:#e4e6eb;"></div>
<svg class="ic" style="left:224.0px;top:675.0px;width:16px;height:16px;color:#5f6678" viewBox="0 0 24 24" fill="none" stroke="currentColor" stroke-width="2" stroke-linecap="round" stroke-linejoin="round"><path d="M5 5a2 2 0 0 1 2 -2h10a2 2 0 0 1 2 2v14a2 2 0 0 1 -2 2h-10a2 2 0 0 1 -2 -2z"/><path d="M9 7l6 0"/><path d="M9 11l6 0"/><path d="M9 15l4 0"/></svg>
<div class="t" style="left:246px;top:675px;font-size:12px;font-weight:400;color:#5f6678;">Notes</div>
<div class="r" style="left:216px;top:698px;width:172px;height:1px;background:#e4e6eb;"></div>
<svg class="ic" style="left:224.0px;top:705.0px;width:16px;height:16px;color:#5f6678" viewBox="0 0 24 24" fill="none" stroke="currentColor" stroke-width="2" stroke-linecap="round" stroke-linejoin="round"><path d="M4 7a2 2 0 0 1 2 -2h12a2 2 0 0 1 2 2v12a2 2 0 0 1 -2 2h-12a2 2 0 0 1 -2 -2z"/><path d="M16 3l0 4"/><path d="M8 3l0 4"/><path d="M4 11l16 0"/><path d="M8 15h2v2h-2z"/></svg>
<div class="t" style="left:246px;top:705px;font-size:12px;font-weight:400;color:#5f6678;">Réservations</div>
<div class="r" style="left:216px;top:728px;width:172px;height:1px;background:#e4e6eb;"></div>
<svg class="ic" style="left:224.0px;top:735.0px;width:16px;height:16px;color:#5f6678" viewBox="0 0 24 24" fill="none" stroke="currentColor" stroke-width="2" stroke-linecap="round" stroke-linejoin="round"><path d="M15 15m-3 0a3 3 0 1 0 6 0a3 3 0 1 0 -6 0"/><path d="M13 17.5v4.5l2 -1.5l2 1.5v-4.5"/><path d="M10 19h-5a2 2 0 0 1 -2 -2v-10c0 -1.1 .9 -2 2 -2h14a2 2 0 0 1 2 2v10a2 2 0 0 1 -1 1.73"/><path d="M6 9l12 0"/><path d="M6 12l3 0"/><path d="M6 15l2 0"/></svg>
<div class="t" style="left:246px;top:735px;font-size:12px;font-weight:400;color:#5f6678;">Certificats</div>
<div class="r" style="left:216px;top:758px;width:172px;height:1px;background:#e4e6eb;"></div>
<svg class="ic" style="left:224.0px;top:765.0px;width:16px;height:16px;color:#5f6678" viewBox="0 0 24 24" fill="none" stroke="currentColor" stroke-width="2" stroke-linecap="round" stroke-linejoin="round"><path d="M19.5 7a9 9 0 0 0 -7.5 -4a8.991 8.991 0 0 0 -7.484 4"/><path d="M11.5 3a16.989 16.989 0 0 0 -1.826 4"/><path d="M12.5 3a16.989 16.989 0 0 1 1.828 4"/><path d="M19.5 17a9 9 0 0 1 -7.5 4a8.991 8.991 0 0 1 -7.484 -4"/><path d="M11.5 21a16.989 16.989 0 0 1 -1.826 -4"/><path d="M12.5 21a16.989 16.989 0 0 0 1.828 -4"/><path d="M2 10l1 4l1.5 -4l1.5 4l1 -4"/><path d="M17 10l1 4l1.5 -4l1.5 4l1 -4"/><path d="M9.5 10l1 4l1.5 -4l1.5 4l1 -4"/></svg>
<div class="t" style="left:246px;top:765px;font-size:12px;font-weight:400;color:#5f6678;">Domaines</div>
<div class="r" style="left:216px;top:788px;width:172px;height:1px;background:#e4e6eb;"></div>
<svg class="ic" style="left:224.0px;top:795.0px;width:16px;height:16px;color:#5f6678" viewBox="0 0 24 24" fill="none" stroke="currentColor" stroke-width="2" stroke-linecap="round" stroke-linejoin="round"><path d="M10 7a2 2 0 0 1 2 -2h6a2 2 0 0 1 2 2v10a2 2 0 0 1 -2 2h-6a2 2 0 0 1 -2 -2z"/><path d="M7 7l0 10"/><path d="M4 8l0 8"/></svg>
<div class="t" style="left:246px;top:795px;font-size:12px;font-weight:400;color:#5f6678;">Applicatifs</div>
<div class="r" style="left:216px;top:818px;width:172px;height:1px;background:#e4e6eb;"></div>
<svg class="ic" style="left:224.0px;top:825.0px;width:16px;height:16px;color:#5f6678" viewBox="0 0 24 24" fill="none" stroke="currentColor" stroke-width="2" stroke-linecap="round" stroke-linejoin="round"><path d="M3 19a9 9 0 0 1 9 0a9 9 0 0 1 9 0"/><path d="M3 6a9 9 0 0 1 9 0a9 9 0 0 1 9 0"/><path d="M3 6l0 13"/><path d="M12 6l0 13"/><path d="M21 6l0 13"/></svg>
<div class="t" style="left:246px;top:825px;font-size:12px;font-weight:400;color:#5f6678;">Informations d'import</div>
<div class="r" style="left:362.9px;top:824.5px;width:20.80000000000001px;height:15.5px;background:#e8ebf2;border-radius:3px"></div>
<div class="t" style="left:362.9px;top:824px;font-size:9.3px;font-weight:700;color:#4b5d8c;width:20.80000000000001px;text-align:center">30</div>
<div class="r" style="left:216px;top:848px;width:172px;height:1px;background:#e4e6eb;"></div>
<svg class="ic" style="left:224.0px;top:855.0px;width:16px;height:16px;color:#5f6678" viewBox="0 0 24 24" fill="none" stroke="currentColor" stroke-width="2" stroke-linecap="round" stroke-linejoin="round"><path d="M12 8l0 4l2 2"/><path d="M3.05 11a9 9 0 1 1 .5 4m-.5 5v-5h5"/></svg>
<div class="t" style="left:246px;top:855px;font-size:12px;font-weight:400;color:#5f6678;">Historique</div>
<div class="r" style="left:304.2px;top:854.5px;width:25.80000000000001px;height:15.5px;background:#e8ebf2;border-radius:3px"></div>
<div class="t" style="left:304.2px;top:854px;font-size:9.3px;font-weight:700;color:#4b5d8c;width:25.80000000000001px;text-align:center">232</div>
<div class="r" style="left:216px;top:878px;width:172px;height:1px;background:#e4e6eb;"></div>
<svg class="ic" style="left:224.0px;top:885.0px;width:16px;height:16px;color:#5f6678" viewBox="0 0 24 24" fill="none" stroke="currentColor" stroke-width="2" stroke-linecap="round" stroke-linejoin="round"><path d="M4 6a2 2 0 0 1 2 -2h12a2 2 0 0 1 2 2v2a2 2 0 0 1 -2 2h-12a2 2 0 0 1 -2 -2z"/><path d="M4 16a2 2 0 0 1 2 -2h12a2 2 0 0 1 2 2v2a2 2 0 0 1 -2 2h-12a2 2 0 0 1 -2 -2z"/></svg>
<div class="t" style="left:246px;top:885px;font-size:12px;font-weight:400;color:#5f6678;">Tous</div>
<div class="r" style="left:387px;top:98px;width:1px;height:810px;background:#e4e6eb;"></div>
<div class="r" style="left:388px;top:99px;width:1508px;height:825px;background:#fff;border-radius:0 6px 0 0;box-shadow:0 0 0 1px #e6e8ec"></div>
<div class="t" style="left:558.5px;top:125px;font-size:12px;font-weight:400;color:#334155;">Type de port réseau à ajouter</div>
<div class="r" style="left:718.5px;top:117.5px;width:94px;height:31px;background:#fff;border:1px solid #dfe3ea;border-radius:4px;box-sizing:border-box"></div>
<div class="t" style="left:725.5px;top:126px;font-size:12px;font-weight:400;color:#1e293b;">Port Ethernet</div>
<svg class="ic" style="left:799.5px;top:134px;width:6px;height:4px" viewBox="0 0 6 4"><path d="M0 0H6L3 4z" fill="#666"/></svg>
<div class="t" style="left:1281px;top:125px;font-size:12px;font-weight:400;color:#334155;">Ajout de plusieurs ports</div>
<div class="r" style="left:1410.5px;top:126.5px;width:10px;height:10px;background:#fff;border:1px solid #767676;border-radius:2px;box-sizing:border-box"></div>
<div class="r" style="left:1728px;top:119px;width:67px;height:29px;background:#fcc55c;border-radius:4px"></div>
<div class="t" style="left:1743px;top:125px;font-size:12px;font-weight:400;color:#1e293b;">Ajouter</div>
<div class="r" style="left:394px;top:169px;width:64px;height:21px;background:#fcc55c;border-radius:3px"></div>
<svg class="ic" style="left:401.0px;top:175.5px;width:11px;height:11px;color:#1e293b" viewBox="0 0 24 24" fill="none" stroke="currentColor" stroke-width="2.4" stroke-linecap="round" stroke-linejoin="round"><path d="M19 6h-9v13"/><path d="M6 15l4 4l4 -4"/></svg>
<div class="t" style="left:416px;top:170px;font-size:10.7px;font-weight:400;color:#1e293b;">Actions</div>
<div class="r" style="left:394px;top:190px;width:1496px;height:111px;background:#f2f2f2;"></div>
<div class="t" style="left:402px;top:205px;font-size:12.7px;font-weight:700;color:#1e293b;">Légende des connexions</div>
<div class="r" style="left:398px;top:231px;width:372px;height:28px;background:#6ecba6;"></div>
<div class="t" style="left:398px;top:237px;font-size:12px;font-weight:400;color:#1e293b;width:372px;text-align:center">Équipement en mode trunk ou tagué</div>
<div class="r" style="left:770px;top:231px;width:372px;height:28px;background:#fe9f7c;"></div>
<div class="t" style="left:770px;top:237px;font-size:12px;font-weight:400;color:#1e293b;width:372px;text-align:center">Hub</div>
<div class="r" style="left:1142px;top:231px;width:372px;height:28px;background:#c0c0c0;"></div>
<div class="t" style="left:1142px;top:237px;font-size:12px;font-weight:400;color:#1e293b;width:372px;text-align:center">Autres équipements</div>
<div class="r" style="left:1514px;top:231px;width:372px;height:28px;background:#2fcbcc;"></div>
<div class="t" style="left:1514px;top:237px;font-size:12px;font-weight:400;color:#1e293b;width:372px;text-align:center">Port agrégé</div>
<div class="r" style="left:394px;top:267px;width:1496px;height:1px;background:#e3e3e3;"></div>
<div class="t" style="left:398.5px;top:277px;font-size:12.8px;font-weight:700;color:#1e293b;">52 Ports réseau</div>
<svg class="ic" style="left:498px;top:277px;width:12px;height:12px" viewBox="0 0 12 12" fill="none" stroke="#1e293b" stroke-width="1.2"><rect x="0.6" y="0.6" width="10.8" height="10.8" rx="1"/><path d="M0.6 4.2h10.8M4.3 4.2v7.2"/><path d="M1.5 3.6l2-2.6M4.5 3.6l2-2.6M7.5 3.6l2-2.6" stroke-width="0.9"/></svg>
<div class="r" style="left:394px;top:301px;width:1496px;height:1px;background:#e6e7e9;"></div>
<div class="r" style="left:394px;top:302px;width:1496px;height:34px;background:#f8f8f8;"></div>
<div class="r" style="left:394px;top:302px;width:26px;height:34px;background:#fff;"></div>
<div class="r" style="left:398px;top:311px;width:16px;height:16px;background:#fff;border:1px solid #dde1e7;border-radius:4px;box-sizing:border-box"></div>
<div class="t" style="left:424.5px;top:311px;font-size:12.9px;font-weight:700;color:#1e293b;">Nom</div>
<div class="t" style="left:463.5px;top:311px;font-size:12.9px;font-weight:700;color:#1e293b;">Port number</div>
<div class="t" style="left:554px;top:311px;font-size:12.9px;font-weight:700;color:#1e293b;">MTU</div>
<div class="t" style="left:594px;top:311px;font-size:12.9px;font-weight:700;color:#1e293b;">Vitesse</div>
<div class="t" style="left:658.5px;top:311px;font-size:12.9px;font-weight:700;color:#1e293b;">Statut interne</div>
<div class="t" style="left:758px;top:311px;font-size:12.9px;font-weight:700;color:#1e293b;">Dernier changement</div>
<div class="t" style="left:901.5px;top:311px;font-size:12.9px;font-weight:700;color:#1e293b;">Nombre d'octets I/O</div>
<div class="t" style="left:1048.5px;top:311px;font-size:12.9px;font-weight:700;color:#1e293b;">Nombre d'erreurs I/O</div>
<div class="t" style="left:1194px;top:311px;font-size:12.9px;font-weight:700;color:#1e293b;">Duplex</div>
<div class="t" style="left:1248.5px;top:311px;font-size:12.9px;font-weight:700;color:#1e293b;">VLAN</div>
<div class="t" style="left:1390.5px;top:311px;font-size:12.9px;font-weight:700;color:#1e293b;">Connecté à</div>
<div class="t" style="left:1743px;top:311px;font-size:12.9px;font-weight:700;color:#1e293b;">Connexion</div>
<div class="t" style="left:1822.3px;top:311px;font-size:12.9px;font-weight:700;color:#1e293b;">Supprimé</div>
<div class="r" style="left:394px;top:336px;width:1496px;height:47px;background:#c0c0c0;"></div>
<div class="r" style="left:398px;top:351.5px;width:16px;height:16px;background:#fff;border-radius:4px;box-sizing:border-box;"></div>
<div class="t" style="left:425px;top:352px;font-size:12px;font-weight:400;color:#4f5e8e;">1</div>
<div class="t" style="left:463.5px;top:352px;font-size:12px;font-weight:400;color:#1e293b;">1</div>
<div class="t" style="left:554px;top:352px;font-size:12px;font-weight:400;color:#1e293b;">1526</div>
<div class="t" style="left:594px;top:352px;font-size:12px;font-weight:400;color:#1e293b;">100 Mbps</div>
<div class="r" style="left:659.5px;top:352.5px;width:12px;height:12px;background:#3eae49;border-radius:50%"></div>
<div class="t" style="left:758px;top:352px;font-size:12px;font-weight:400;color:#1e293b;">44.41 seconds</div>
<div class="t" style="left:901px;top:352px;font-size:12px;font-weight:400;color:#1e293b;">88.65 Mio / 2.75 Gio</div>
<div class="t" style="left:1194px;top:352px;font-size:12px;font-weight:400;color:#1e293b;">Full</div>
<div class="t" style="left:1308px;top:344px;font-size:12px;font-weight:400;color:#1e293b;">42]T</div>
<div class="t" style="left:1308px;top:360px;font-size:12px;font-weight:400;color:#1e293b;">ie [49]U</div>
<div class="r" style="left:1245px;top:342.0px;width:63px;height:35px;background:#c5c5c5;overflow:hidden"><div class="r" style="left:5px;top:5.5px;width:27px;height:8px;background:#b3b3b3;filter:blur(2px)"></div><div class="r" style="left:36px;top:5.5px;width:22px;height:8px;background:#b3b3b3;filter:blur(2px)"></div><div class="r" style="left:5px;top:21.5px;width:28px;height:8px;background:#b3b3b3;filter:blur(2px)"></div><div class="r" style="left:37px;top:21.5px;width:30px;height:8px;background:#b3b3b3;filter:blur(2px)"></div></div>
<div class="t" style="left:1394.5px;top:343px;font-size:12.5px;font-weight:400;color:#1e293b;">?</div>
<div class="t" style="left:1408px;top:344px;font-size:12px;font-weight:400;color:#4f5e8e;letter-spacing:-0.168px">ALE International</div>
<div class="t" style="left:1500.8px;top:344px;font-size:12px;font-weight:400;color:#1e293b;">&gt;</div>
<svg class="ic" style="left:1511.3px;top:344.0px;width:14px;height:14px;color:#1e293b" viewBox="0 0 24 24" fill="none" stroke="currentColor" stroke-width="1.7" stroke-linecap="round" stroke-linejoin="round"><path d="M6 9a6 6 0 1 0 12 0a6 6 0 0 0 -12 0"/><path d="M12 3c1.333 .333 2 2.333 2 6s-.667 5.667 -2 6"/><path d="M12 3c-1.333 .333 -2 2.333 -2 6s.667 5.667 2 6"/><path d="M6 9h12"/><path d="M3 20h7"/><path d="M14 20h7"/><path d="M10 20a2 2 0 1 0 4 0a2 2 0 0 0 -4 0"/><path d="M12 15v3"/></svg>
<div class="t" style="left:1527.8px;top:344px;font-size:12px;font-weight:400;color:#4f5e8e;">1</div>
<div class="t" style="left:1391px;top:360px;font-size:12px;font-weight:400;color:#1e293b;">00:80:9f:a5:27:2d</div>
<svg class="ic" style="left:1742.5px;top:351.0px;width:14px;height:14px;color:#52b55a" viewBox="0 0 24 24" fill="none" stroke="currentColor" stroke-width="2" stroke-linecap="round" stroke-linejoin="round"><path d="M9 15l6 -6"/><path d="M11 6l.463 -.536a5 5 0 0 1 7.071 7.072l-.534 .464"/><path d="M13 18l-.397 .534a5.068 5.068 0 0 1 -7.127 0a4.972 4.972 0 0 1 0 -7.071l.524 -.463"/></svg>
<div class="t" style="left:1822px;top:352px;font-size:12px;font-weight:400;color:#1e293b;">Non</div>
<div class="r" style="left:394px;top:384px;width:1496px;height:109px;background:#c0c0c0;"></div>
<div class="r" style="left:394px;top:383px;width:1496px;height:1px;background:#e6e7e9;"></div>
<div class="r" style="left:398px;top:430.5px;width:16px;height:16px;background:#fff;border-radius:4px;box-sizing:border-box;"></div>
<div class="t" style="left:425px;top:431px;font-size:12px;font-weight:400;color:#4f5e8e;">2</div>
<div class="t" style="left:463.5px;top:431px;font-size:12px;font-weight:400;color:#1e293b;">2</div>
<div class="t" style="left:554px;top:431px;font-size:12px;font-weight:400;color:#1e293b;">1526</div>
<div class="t" style="left:594px;top:431px;font-size:12px;font-weight:400;color:#1e293b;">1 Gbps</div>
<div class="r" style="left:659.5px;top:431.5px;width:12px;height:12px;background:#3eae49;border-radius:50%"></div>
<div class="t" style="left:758px;top:431px;font-size:12px;font-weight:400;color:#1e293b;">11 hours, 52:29.08</div>
<div class="t" style="left:901px;top:431px;font-size:12px;font-weight:400;color:#1e293b;">39.2 Mio / 2.74 Gio</div>
<div class="t" style="left:1194px;top:431px;font-size:12px;font-weight:400;color:#1e293b;">Full</div>
<div class="t" style="left:1322px;top:390px;font-size:12px;font-weight:400;color:#1e293b;">res [26]T</div>
<div class="t" style="left:1322px;top:406px;font-size:12px;font-weight:400;color:#1e293b;">5]T</div>
<div class="t" style="left:1322px;top:422px;font-size:12px;font-weight:400;color:#1e293b;">2]T</div>
<div class="t" style="left:1322px;top:438px;font-size:12px;font-weight:400;color:#1e293b;">4]T</div>
<div class="t" style="left:1322px;top:454px;font-size:12px;font-weight:400;color:#1e293b;">]T</div>
<div class="t" style="left:1322px;top:470px;font-size:12px;font-weight:400;color:#1e293b;">[49]U</div>
<div class="r" style="left:1245px;top:383px;width:77px;height:110px;background:#c5c5c5;overflow:hidden"><div class="r" style="left:5px;top:11.5px;width:23px;height:8px;background:#b3b3b3;filter:blur(2px)"></div><div class="r" style="left:32px;top:11.5px;width:29px;height:8px;background:#b3b3b3;filter:blur(2px)"></div><div class="r" style="left:5px;top:27.5px;width:33px;height:8px;background:#b3b3b3;filter:blur(2px)"></div><div class="r" style="left:42px;top:27.5px;width:32px;height:8px;background:#b3b3b3;filter:blur(2px)"></div><div class="r" style="left:5px;top:43.5px;width:32px;height:8px;background:#b3b3b3;filter:blur(2px)"></div><div class="r" style="left:41px;top:43.5px;width:28px;height:8px;background:#b3b3b3;filter:blur(2px)"></div><div class="r" style="left:5px;top:59.5px;width:25px;height:8px;background:#b3b3b3;filter:blur(2px)"></div><div class="r" style="left:34px;top:59.5px;width:24px;height:8px;background:#b3b3b3;filter:blur(2px)"></div><div class="r" style="left:5px;top:75.5px;width:33px;height:8px;background:#b3b3b3;filter:blur(2px)"></div><div class="r" style="left:42px;top:75.5px;width:24px;height:8px;background:#b3b3b3;filter:blur(2px)"></div><div class="r" style="left:5px;top:91.5px;width:26px;height:8px;background:#b3b3b3;filter:blur(2px)"></div><div class="r" style="left:35px;top:91.5px;width:31px;height:8px;background:#b3b3b3;filter:blur(2px)"></div></div>
<div class="t" style="left:1394.5px;top:421px;font-size:12.5px;font-weight:400;color:#1e293b;">?</div>
<div class="t" style="left:1408px;top:422px;font-size:12px;font-weight:400;color:#4f5e8e;letter-spacing:-0.290px">Ruckus Wireless</div>
<div class="t" style="left:1500px;top:422px;font-size:12px;font-weight:400;color:#1e293b;">&gt;</div>
<svg class="ic" style="left:1510.5px;top:422.0px;width:14px;height:14px;color:#1e293b" viewBox="0 0 24 24" fill="none" stroke="currentColor" stroke-width="1.7" stroke-linecap="round" stroke-linejoin="round"><path d="M6 9a6 6 0 1 0 12 0a6 6 0 0 0 -12 0"/><path d="M12 3c1.333 .333 2 2.333 2 6s-.667 5.667 -2 6"/><path d="M12 3c-1.333 .333 -2 2.333 -2 6s.667 5.667 2 6"/><path d="M6 9h12"/><path d="M3 20h7"/><path d="M14 20h7"/><path d="M10 20a2 2 0 1 0 4 0a2 2 0 0 0 -4 0"/><path d="M12 15v3"/></svg>
<div class="t" style="left:1527px;top:422px;font-size:12px;font-weight:400;color:#4f5e8e;">2</div>
<div class="t" style="left:1391px;top:438px;font-size:12px;font-weight:400;color:#1e293b;">00:25:c4:22:07:20</div>
<svg class="ic" style="left:1742.5px;top:430.0px;width:14px;height:14px;color:#52b55a" viewBox="0 0 24 24" fill="none" stroke="currentColor" stroke-width="2" stroke-linecap="round" stroke-linejoin="round"><path d="M9 15l6 -6"/><path d="M11 6l.463 -.536a5 5 0 0 1 7.071 7.072l-.534 .464"/><path d="M13 18l-.397 .534a5.068 5.068 0 0 1 -7.127 0a4.972 4.972 0 0 1 0 -7.071l.524 -.463"/></svg>
<div class="t" style="left:1822px;top:431px;font-size:12px;font-weight:400;color:#1e293b;">Non</div>
<div class="r" style="left:394px;top:494px;width:1496px;height:76px;background:#c0c0c0;"></div>
<div class="r" style="left:394px;top:493px;width:1496px;height:1px;background:#e6e7e9;"></div>
<div class="r" style="left:398px;top:524.0px;width:16px;height:16px;background:#fff;border-radius:4px;box-sizing:border-box;"></div>
<div class="t" style="left:425px;top:524px;font-size:12px;font-weight:400;color:#4f5e8e;">3</div>
<div class="t" style="left:463.5px;top:524px;font-size:12px;font-weight:400;color:#1e293b;">3</div>
<div class="t" style="left:554px;top:524px;font-size:12px;font-weight:400;color:#1e293b;">1526</div>
<div class="t" style="left:594px;top:524px;font-size:12px;font-weight:400;color:#1e293b;">1 Gbps</div>
<div class="r" style="left:659.5px;top:525.0px;width:12px;height:12px;background:#3eae49;border-radius:50%"></div>
<div class="t" style="left:758px;top:524px;font-size:12px;font-weight:400;color:#1e293b;">1 minute, 38.56</div>
<div class="t" style="left:901px;top:524px;font-size:12px;font-weight:400;color:#1e293b;">441.84 Mio / 1.81 Gio</div>
<div class="t" style="left:1194px;top:524px;font-size:12px;font-weight:400;color:#1e293b;">Full</div>
<div class="t" style="left:1322px;top:500px;font-size:12px;font-weight:400;color:#1e293b;">5]T</div>
<div class="t" style="left:1322px;top:516px;font-size:12px;font-weight:400;color:#1e293b;">2]T</div>
<div class="t" style="left:1322px;top:532px;font-size:12px;font-weight:400;color:#1e293b;">28]U</div>
<div class="t" style="left:1322px;top:548px;font-size:12px;font-weight:400;color:#1e293b;">]T</div>
<div class="r" style="left:1245px;top:493px;width:77px;height:77px;background:#c5c5c5;overflow:hidden"><div class="r" style="left:5px;top:11.0px;width:24px;height:8px;background:#b3b3b3;filter:blur(2px)"></div><div class="r" style="left:33px;top:11.0px;width:26px;height:8px;background:#b3b3b3;filter:blur(2px)"></div><div class="r" style="left:5px;top:27.0px;width:33px;height:8px;background:#b3b3b3;filter:blur(2px)"></div><div class="r" style="left:42px;top:27.0px;width:26px;height:8px;background:#b3b3b3;filter:blur(2px)"></div><div class="r" style="left:5px;top:43.0px;width:32px;height:8px;background:#b3b3b3;filter:blur(2px)"></div><div class="r" style="left:41px;top:43.0px;width:24px;height:8px;background:#b3b3b3;filter:blur(2px)"></div><div class="r" style="left:5px;top:59.0px;width:29px;height:8px;background:#b3b3b3;filter:blur(2px)"></div><div class="r" style="left:38px;top:59.0px;width:33px;height:8px;background:#b3b3b3;filter:blur(2px)"></div></div>
<div class="t" style="left:1394.5px;top:507px;font-size:12.5px;font-weight:400;color:#1e293b;">?</div>
<div class="r" style="left:1408px;top:509px;width:80px;height:14px;background:#aab1c6;filter:blur(1.5px)"></div>
<div class="t" style="left:1494px;top:508px;font-size:12px;font-weight:400;color:#1e293b;">&gt;</div>
<svg class="ic" style="left:1504.5px;top:508.0px;width:14px;height:14px;color:#1e293b" viewBox="0 0 24 24" fill="none" stroke="currentColor" stroke-width="1.7" stroke-linecap="round" stroke-linejoin="round"><path d="M6 9a6 6 0 1 0 12 0a6 6 0 0 0 -12 0"/><path d="M12 3c1.333 .333 2 2.333 2 6s-.667 5.667 -2 6"/><path d="M12 3c-1.333 .333 -2 2.333 -2 6s.667 5.667 2 6"/><path d="M6 9h12"/><path d="M3 20h7"/><path d="M14 20h7"/><path d="M10 20a2 2 0 1 0 4 0a2 2 0 0 0 -4 0"/><path d="M12 15v3"/></svg>
<div class="t" style="left:1521px;top:508px;font-size:12px;font-weight:400;color:#4f5e8e;">eth0</div>
<div class="t" style="left:1391px;top:524px;font-size:12px;font-weight:400;color:#1e293b;">20:9c:b4:c4:0c:e4</div>
<div class="r" style="left:1392px;top:541px;width:55px;height:12px;background:#b0b0b0;filter:blur(2.5px)"></div>
<svg class="ic" style="left:1742.5px;top:523.5px;width:14px;height:14px;color:#52b55a" viewBox="0 0 24 24" fill="none" stroke="currentColor" stroke-width="2" stroke-linecap="round" stroke-linejoin="round"><path d="M9 15l6 -6"/><path d="M11 6l.463 -.536a5 5 0 0 1 7.071 7.072l-.534 .464"/><path d="M13 18l-.397 .534a5.068 5.068 0 0 1 -7.127 0a4.972 4.972 0 0 1 0 -7.071l.524 -.463"/></svg>
<div class="t" style="left:1822px;top:524px;font-size:12px;font-weight:400;color:#1e293b;">Non</div>
<div class="r" style="left:394px;top:571px;width:1496px;height:46px;background:#c0c0c0;"></div>
<div class="r" style="left:394px;top:570px;width:1496px;height:1px;background:#e6e7e9;"></div>
<div class="r" style="left:398px;top:586.0px;width:16px;height:16px;background:#fff;border-radius:4px;box-sizing:border-box;"></div>
<div class="t" style="left:425px;top:586px;font-size:12px;font-weight:400;color:#4f5e8e;">4</div>
<div class="t" style="left:463.5px;top:586px;font-size:12px;font-weight:400;color:#1e293b;">4</div>
<div class="t" style="left:554px;top:586px;font-size:12px;font-weight:400;color:#1e293b;">1526</div>
<div class="t" style="left:594px;top:586px;font-size:12px;font-weight:400;color:#1e293b;">100 Mbps</div>
<div class="r" style="left:659.5px;top:587.0px;width:12px;height:12px;background:#3eae49;border-radius:50%"></div>
<div class="t" style="left:758px;top:586px;font-size:12px;font-weight:400;color:#1e293b;">45.08 seconds</div>
<div class="t" style="left:901px;top:586px;font-size:12px;font-weight:400;color:#1e293b;">60.59 Mio / 1.08 Gio</div>
<div class="t" style="left:1194px;top:586px;font-size:12px;font-weight:400;color:#1e293b;">Full</div>
<div class="t" style="left:1322px;top:578px;font-size:12px;font-weight:400;color:#1e293b;">]T</div>
<div class="t" style="left:1322px;top:594px;font-size:12px;font-weight:400;color:#1e293b;">[49]U</div>
<div class="r" style="left:1245px;top:570px;width:77px;height:47px;background:#c5c5c5;overflow:hidden"><div class="r" style="left:5px;top:12.0px;width:23px;height:8px;background:#b3b3b3;filter:blur(2px)"></div><div class="r" style="left:32px;top:12.0px;width:31px;height:8px;background:#b3b3b3;filter:blur(2px)"></div><div class="r" style="left:5px;top:28.0px;width:24px;height:8px;background:#b3b3b3;filter:blur(2px)"></div><div class="r" style="left:33px;top:28.0px;width:28px;height:8px;background:#b3b3b3;filter:blur(2px)"></div></div>
<div class="t" style="left:1394.5px;top:577px;font-size:12.5px;font-weight:400;color:#1e293b;">?</div>
<div class="t" style="left:1408px;top:578px;font-size:12px;font-weight:400;color:#4f5e8e;letter-spacing:-0.168px">ALE International</div>
<div class="t" style="left:1500.8px;top:578px;font-size:12px;font-weight:400;color:#1e293b;">&gt;</div>
<svg class="ic" style="left:1511.3px;top:578.0px;width:14px;height:14px;color:#1e293b" viewBox="0 0 24 24" fill="none" stroke="currentColor" stroke-width="1.7" stroke-linecap="round" stroke-linejoin="round"><path d="M6 9a6 6 0 1 0 12 0a6 6 0 0 0 -12 0"/><path d="M12 3c1.333 .333 2 2.333 2 6s-.667 5.667 -2 6"/><path d="M12 3c-1.333 .333 -2 2.333 -2 6s.667 5.667 2 6"/><path d="M6 9h12"/><path d="M3 20h7"/><path d="M14 20h7"/><path d="M10 20a2 2 0 1 0 4 0a2 2 0 0 0 -4 0"/><path d="M12 15v3"/></svg>
<div class="t" style="left:1527.8px;top:578px;font-size:12px;font-weight:400;color:#4f5e8e;">4</div>
<div class="t" style="left:1391px;top:594px;font-size:12px;font-weight:400;color:#1e293b;">00:80:9f:a4:ef:91</div>
<svg class="ic" style="left:1742.5px;top:585.5px;width:14px;height:14px;color:#52b55a" viewBox="0 0 24 24" fill="none" stroke="currentColor" stroke-width="2" stroke-linecap="round" stroke-linejoin="round"><path d="M9 15l6 -6"/><path d="M11 6l.463 -.536a5 5 0 0 1 7.071 7.072l-.534 .464"/><path d="M13 18l-.397 .534a5.068 5.068 0 0 1 -7.127 0a4.972 4.972 0 0 1 0 -7.071l.524 -.463"/></svg>
<div class="t" style="left:1822px;top:586px;font-size:12px;font-weight:400;color:#1e293b;">Non</div>
<div class="r" style="left:398px;top:632.5px;width:16px;height:16px;background:#fff;border-radius:4px;box-sizing:border-box;border:1px solid #dde1e7"></div>
<div class="t" style="left:425px;top:633px;font-size:12px;font-weight:400;color:#4f5e8e;">5</div>
<div class="t" style="left:463.5px;top:633px;font-size:12px;font-weight:400;color:#1e293b;">5</div>
<div class="t" style="left:554px;top:633px;font-size:12px;font-weight:400;color:#1e293b;">1526</div>
<div class="t" style="left:594px;top:633px;font-size:12px;font-weight:400;color:#1e293b;">1 Gbps</div>
<div class="r" style="left:659.5px;top:633.5px;width:12px;height:12px;background:#3eae49;border-radius:50%"></div>
<div class="t" style="left:758px;top:633px;font-size:12px;font-weight:400;color:#1e293b;">17.40 seconds</div>
<div class="t" style="left:901px;top:633px;font-size:12px;font-weight:400;color:#1e293b;"></div>
<div class="t" style="left:1194px;top:633px;font-size:12px;font-weight:400;color:#1e293b;">Full</div>
<div class="t" style="left:1322px;top:624px;font-size:12px;font-weight:400;color:#1e293b;">]T</div>
<div class="t" style="left:1322px;top:640px;font-size:12px;font-weight:400;color:#1e293b;">[49]U</div>
<div class="r" style="left:1245px;top:616px;width:77px;height:48px;background:#f3f3f3;overflow:hidden"><div class="r" style="left:5px;top:12.5px;width:30px;height:8px;background:#e4e4e4;filter:blur(2px)"></div><div class="r" style="left:39px;top:12.5px;width:25px;height:8px;background:#e4e4e4;filter:blur(2px)"></div><div class="r" style="left:5px;top:28.5px;width:34px;height:8px;background:#e4e4e4;filter:blur(2px)"></div><div class="r" style="left:43px;top:28.5px;width:22px;height:8px;background:#e4e4e4;filter:blur(2px)"></div></div>
<svg class="ic" style="left:1742.5px;top:632.0px;width:14px;height:14px;color:#d63939" viewBox="0 0 24 24" fill="none" stroke="currentColor" stroke-width="2" stroke-linecap="round" stroke-linejoin="round"><path d="M17 22v-2"/><path d="M9 15l6 -6"/><path d="M11 6l.463 -.536a5 5 0 0 1 7.071 7.072l-.534 .464"/><path d="M13 18l-.397 .534a5.068 5.068 0 0 1 -7.127 0a4.972 4.972 0 0 1 0 -7.071l.524 -.463"/><path d="M20 17h2"/><path d="M2 7h2"/><path d="M7 2v2"/></svg>
<div class="t" style="left:1822px;top:633px;font-size:12px;font-weight:400;color:#1e293b;">Non</div>
<div class="r" style="left:394px;top:664px;width:1496px;height:46px;background:#c0c0c0;"></div>
<div class="r" style="left:398px;top:679.0px;width:16px;height:16px;background:#fff;border-radius:4px;box-sizing:border-box;"></div>
<div class="t" style="left:425px;top:680px;font-size:12px;font-weight:400;color:#4f5e8e;">6</div>
<div class="t" style="left:463.5px;top:680px;font-size:12px;font-weight:400;color:#1e293b;">6</div>
<div class="t" style="left:554px;top:680px;font-size:12px;font-weight:400;color:#1e293b;">1526</div>
<div class="t" style="left:594px;top:680px;font-size:12px;font-weight:400;color:#1e293b;">100 Mbps</div>
<div class="r" style="left:659.5px;top:680.0px;width:12px;height:12px;background:#3eae49;border-radius:50%"></div>
<div class="t" style="left:758px;top:680px;font-size:12px;font-weight:400;color:#1e293b;">18.85 seconds</div>
<div class="t" style="left:901px;top:680px;font-size:12px;font-weight:400;color:#1e293b;">5.95 Mio / 288.38 Mio</div>
<div class="t" style="left:1194px;top:680px;font-size:12px;font-weight:400;color:#1e293b;">Full</div>
<div class="t" style="left:1322px;top:671px;font-size:12px;font-weight:400;color:#1e293b;">U</div>
<div class="t" style="left:1322px;top:687px;font-size:12px;font-weight:400;color:#1e293b;">]T</div>
<div class="r" style="left:1245px;top:663px;width:77px;height:47px;background:#c5c5c5;overflow:hidden"><div class="r" style="left:5px;top:12.0px;width:32px;height:8px;background:#b3b3b3;filter:blur(2px)"></div><div class="r" style="left:41px;top:12.0px;width:21px;height:8px;background:#b3b3b3;filter:blur(2px)"></div><div class="r" style="left:5px;top:28.0px;width:22px;height:8px;background:#b3b3b3;filter:blur(2px)"></div><div class="r" style="left:31px;top:28.0px;width:31px;height:8px;background:#b3b3b3;filter:blur(2px)"></div></div>
<div class="t" style="left:1394.5px;top:670px;font-size:12.5px;font-weight:400;color:#1e293b;">?</div>
<div class="t" style="left:1408px;top:671px;font-size:12px;font-weight:400;color:#4f5e8e;letter-spacing:-0.162px">Raspberry Pi Foundation</div>
<div class="t" style="left:1540.7px;top:671px;font-size:12px;font-weight:400;color:#1e293b;">&gt;</div>
<svg class="ic" style="left:1551.2px;top:671.0px;width:14px;height:14px;color:#1e293b" viewBox="0 0 24 24" fill="none" stroke="currentColor" stroke-width="1.7" stroke-linecap="round" stroke-linejoin="round"><path d="M6 9a6 6 0 1 0 12 0a6 6 0 0 0 -12 0"/><path d="M12 3c1.333 .333 2 2.333 2 6s-.667 5.667 -2 6"/><path d="M12 3c-1.333 .333 -2 2.333 -2 6s.667 5.667 2 6"/><path d="M6 9h12"/><path d="M3 20h7"/><path d="M14 20h7"/><path d="M10 20a2 2 0 1 0 4 0a2 2 0 0 0 -4 0"/><path d="M12 15v3"/></svg>
<div class="t" style="left:1567.7px;top:671px;font-size:12px;font-weight:400;color:#4f5e8e;">6</div>
<div class="t" style="left:1391px;top:687px;font-size:12px;font-weight:400;color:#1e293b;">b8:27:eb:7a:2c:be</div>
<svg class="ic" style="left:1742.5px;top:678.5px;width:14px;height:14px;color:#52b55a" viewBox="0 0 24 24" fill="none" stroke="currentColor" stroke-width="2" stroke-linecap="round" stroke-linejoin="round"><path d="M9 15l6 -6"/><path d="M11 6l.463 -.536a5 5 0 0 1 7.071 7.072l-.534 .464"/><path d="M13 18l-.397 .534a5.068 5.068 0 0 1 -7.127 0a4.972 4.972 0 0 1 0 -7.071l.524 -.463"/></svg>
<div class="t" style="left:1822px;top:680px;font-size:12px;font-weight:400;color:#1e293b;">Non</div>
<div class="r" style="left:394px;top:711px;width:1496px;height:109px;background:#c0c0c0;"></div>
<div class="r" style="left:394px;top:710px;width:1496px;height:1px;background:#e6e7e9;"></div>
<div class="r" style="left:398px;top:757.5px;width:16px;height:16px;background:#fff;border-radius:4px;box-sizing:border-box;"></div>
<div class="t" style="left:425px;top:758px;font-size:12px;font-weight:400;color:#4f5e8e;">7</div>
<div class="t" style="left:463.5px;top:758px;font-size:12px;font-weight:400;color:#1e293b;">7</div>
<div class="t" style="left:554px;top:758px;font-size:12px;font-weight:400;color:#1e293b;">1526</div>
<div class="t" style="left:594px;top:758px;font-size:12px;font-weight:400;color:#1e293b;">1 Gbps</div>
<div class="r" style="left:659.5px;top:758.5px;width:12px;height:12px;background:#3eae49;border-radius:50%"></div>
<div class="t" style="left:758px;top:758px;font-size:12px;font-weight:400;color:#1e293b;">1 minute, 39.06</div>
<div class="t" style="left:901px;top:758px;font-size:12px;font-weight:400;color:#1e293b;">160.26 Mio / 2.1 Gio</div>
<div class="t" style="left:1194px;top:758px;font-size:12px;font-weight:400;color:#1e293b;">Full</div>
<div class="t" style="left:1322px;top:718px;font-size:12px;font-weight:400;color:#1e293b;">res [26]T</div>
<div class="t" style="left:1322px;top:734px;font-size:12px;font-weight:400;color:#1e293b;">5]T</div>
<div class="t" style="left:1322px;top:750px;font-size:12px;font-weight:400;color:#1e293b;">2]T</div>
<div class="t" style="left:1322px;top:766px;font-size:12px;font-weight:400;color:#1e293b;">28]U</div>
<div class="t" style="left:1322px;top:782px;font-size:12px;font-weight:400;color:#1e293b;">4]T</div>
<div class="t" style="left:1322px;top:798px;font-size:12px;font-weight:400;color:#1e293b;">]T</div>
<div class="r" style="left:1245px;top:710px;width:77px;height:110px;background:#c5c5c5;overflow:hidden"><div class="r" style="left:5px;top:11.5px;width:23px;height:8px;background:#b3b3b3;filter:blur(2px)"></div><div class="r" style="left:32px;top:11.5px;width:25px;height:8px;background:#b3b3b3;filter:blur(2px)"></div><div class="r" style="left:5px;top:27.5px;width:28px;height:8px;background:#b3b3b3;filter:blur(2px)"></div><div class="r" style="left:37px;top:27.5px;width:34px;height:8px;background:#b3b3b3;filter:blur(2px)"></div><div class="r" style="left:5px;top:43.5px;width:23px;height:8px;background:#b3b3b3;filter:blur(2px)"></div><div class="r" style="left:32px;top:43.5px;width:25px;height:8px;background:#b3b3b3;filter:blur(2px)"></div><div class="r" style="left:5px;top:59.5px;width:34px;height:8px;background:#b3b3b3;filter:blur(2px)"></div><div class="r" style="left:43px;top:59.5px;width:28px;height:8px;background:#b3b3b3;filter:blur(2px)"></div><div class="r" style="left:5px;top:75.5px;width:30px;height:8px;background:#b3b3b3;filter:blur(2px)"></div><div class="r" style="left:39px;top:75.5px;width:32px;height:8px;background:#b3b3b3;filter:blur(2px)"></div><div class="r" style="left:5px;top:91.5px;width:22px;height:8px;background:#b3b3b3;filter:blur(2px)"></div><div class="r" style="left:31px;top:91.5px;width:30px;height:8px;background:#b3b3b3;filter:blur(2px)"></div></div>
<div class="t" style="left:1394.5px;top:741px;font-size:12.5px;font-weight:400;color:#1e293b;">?</div>
<div class="r" style="left:1408px;top:743px;width:127px;height:14px;background:#aab1c6;filter:blur(1.5px)"></div>
<div class="t" style="left:1538px;top:742px;font-size:12px;font-weight:400;color:#1e293b;">&gt;</div>
<svg class="ic" style="left:1548.5px;top:742.0px;width:14px;height:14px;color:#1e293b" viewBox="0 0 24 24" fill="none" stroke="currentColor" stroke-width="1.7" stroke-linecap="round" stroke-linejoin="round"><path d="M6 9a6 6 0 1 0 12 0a6 6 0 0 0 -12 0"/><path d="M12 3c1.333 .333 2 2.333 2 6s-.667 5.667 -2 6"/><path d="M12 3c-1.333 .333 -2 2.333 -2 6s.667 5.667 2 6"/><path d="M6 9h12"/><path d="M3 20h7"/><path d="M14 20h7"/><path d="M10 20a2 2 0 1 0 4 0a2 2 0 0 0 -4 0"/><path d="M12 15v3"/></svg>
<div class="t" style="left:1565px;top:742px;font-size:12px;font-weight:400;color:#4f5e8e;">eth0</div>
<div class="t" style="left:1391px;top:758px;font-size:12px;font-weight:400;color:#1e293b;">20:9c:b4:c3:d8:4a</div>
<div class="r" style="left:1392px;top:775px;width:55px;height:12px;background:#b0b0b0;filter:blur(2.5px)"></div>
<svg class="ic" style="left:1742.5px;top:757.0px;width:14px;height:14px;color:#52b55a" viewBox="0 0 24 24" fill="none" stroke="currentColor" stroke-width="2" stroke-linecap="round" stroke-linejoin="round"><path d="M9 15l6 -6"/><path d="M11 6l.463 -.536a5 5 0 0 1 7.071 7.072l-.534 .464"/><path d="M13 18l-.397 .534a5.068 5.068 0 0 1 -7.127 0a4.972 4.972 0 0 1 0 -7.071l.524 -.463"/></svg>
<div class="t" style="left:1822px;top:758px;font-size:12px;font-weight:400;color:#1e293b;">Non</div>
<div class="r" style="left:394px;top:821px;width:1496px;height:109px;background:#c0c0c0;"></div>
<div class="r" style="left:394px;top:820px;width:1496px;height:1px;background:#e6e7e9;"></div>
<div class="r" style="left:398px;top:867.5px;width:16px;height:16px;background:#fff;border-radius:4px;box-sizing:border-box;"></div>
<div class="t" style="left:425px;top:868px;font-size:12px;font-weight:400;color:#4f5e8e;">8</div>
<div class="t" style="left:463.5px;top:868px;font-size:12px;font-weight:400;color:#1e293b;">8</div>
<div class="t" style="left:554px;top:868px;font-size:12px;font-weight:400;color:#1e293b;">1526</div>
<div class="t" style="left:594px;top:868px;font-size:12px;font-weight:400;color:#1e293b;">1 Gbps</div>
<div class="r" style="left:659.5px;top:868.5px;width:12px;height:12px;background:#3eae49;border-radius:50%"></div>
<div class="t" style="left:758px;top:868px;font-size:12px;font-weight:400;color:#1e293b;">1 minute, 37.86</div>
<div class="t" style="left:901px;top:868px;font-size:12px;font-weight:400;color:#1e293b;">734.47 Mio / 149.85 Mio</div>
<div class="t" style="left:1194px;top:868px;font-size:12px;font-weight:400;color:#1e293b;">Full</div>
<div class="t" style="left:1322px;top:828px;font-size:12px;font-weight:400;color:#1e293b;">res [26]T</div>
<div class="t" style="left:1322px;top:844px;font-size:12px;font-weight:400;color:#1e293b;">5]T</div>
<div class="t" style="left:1322px;top:860px;font-size:12px;font-weight:400;color:#1e293b;">2]T</div>
<div class="t" style="left:1322px;top:876px;font-size:12px;font-weight:400;color:#1e293b;">28]U</div>
<div class="t" style="left:1322px;top:892px;font-size:12px;font-weight:400;color:#1e293b;">4]T</div>
<div class="t" style="left:1322px;top:908px;font-size:12px;font-weight:400;color:#1e293b;">]T</div>
<div class="r" style="left:1245px;top:820px;width:77px;height:110px;background:#c5c5c5;overflow:hidden"><div class="r" style="left:5px;top:11.5px;width:30px;height:8px;background:#b3b3b3;filter:blur(2px)"></div><div class="r" style="left:39px;top:11.5px;width:20px;height:8px;background:#b3b3b3;filter:blur(2px)"></div><div class="r" style="left:5px;top:27.5px;width:29px;height:8px;background:#b3b3b3;filter:blur(2px)"></div><div class="r" style="left:38px;top:27.5px;width:30px;height:8px;background:#b3b3b3;filter:blur(2px)"></div><div class="r" style="left:5px;top:43.5px;width:30px;height:8px;background:#b3b3b3;filter:blur(2px)"></div><div class="r" style="left:39px;top:43.5px;width:24px;height:8px;background:#b3b3b3;filter:blur(2px)"></div><div class="r" style="left:5px;top:59.5px;width:34px;height:8px;background:#b3b3b3;filter:blur(2px)"></div><div class="r" style="left:43px;top:59.5px;width:28px;height:8px;background:#b3b3b3;filter:blur(2px)"></div><div class="r" style="left:5px;top:75.5px;width:28px;height:8px;background:#b3b3b3;filter:blur(2px)"></div><div class="r" style="left:37px;top:75.5px;width:31px;height:8px;background:#b3b3b3;filter:blur(2px)"></div><div class="r" style="left:5px;top:91.5px;width:25px;height:8px;background:#b3b3b3;filter:blur(2px)"></div><div class="r" style="left:34px;top:91.5px;width:21px;height:8px;background:#b3b3b3;filter:blur(2px)"></div></div>
<div class="t" style="left:1394.5px;top:851px;font-size:12.5px;font-weight:400;color:#1e293b;">?</div>
<div class="r" style="left:1408px;top:853px;width:141px;height:14px;background:#aab1c6;filter:blur(1.5px)"></div>
<div class="t" style="left:1551px;top:852px;font-size:12px;font-weight:400;color:#1e293b;">&gt;</div>
<svg class="ic" style="left:1561.5px;top:852.0px;width:14px;height:14px;color:#1e293b" viewBox="0 0 24 24" fill="none" stroke="currentColor" stroke-width="1.7" stroke-linecap="round" stroke-linejoin="round"><path d="M6 9a6 6 0 1 0 12 0a6 6 0 0 0 -12 0"/><path d="M12 3c1.333 .333 2 2.333 2 6s-.667 5.667 -2 6"/><path d="M12 3c-1.333 .333 -2 2.333 -2 6s.667 5.667 2 6"/><path d="M6 9h12"/><path d="M3 20h7"/><path d="M14 20h7"/><path d="M10 20a2 2 0 1 0 4 0a2 2 0 0 0 -4 0"/><path d="M12 15v3"/></svg>
<div class="t" style="left:1578px;top:852px;font-size:12px;font-weight:400;color:#4f5e8e;">eth0</div>
<div class="t" style="left:1391px;top:868px;font-size:12px;font-weight:400;color:#1e293b;">20:9c:b4:c4:01:1c</div>
<div class="r" style="left:1392px;top:885px;width:55px;height:12px;background:#b0b0b0;filter:blur(2.5px)"></div>
<svg class="ic" style="left:1742.5px;top:867.0px;width:14px;height:14px;color:#52b55a" viewBox="0 0 24 24" fill="none" stroke="currentColor" stroke-width="2" stroke-linecap="round" stroke-linejoin="round"><path d="M9 15l6 -6"/><path d="M11 6l.463 -.536a5 5 0 0 1 7.071 7.072l-.534 .464"/><path d="M13 18l-.397 .534a5.068 5.068 0 0 1 -7.127 0a4.972 4.972 0 0 1 0 -7.071l.524 -.463"/></svg>
<div class="t" style="left:1822px;top:868px;font-size:12px;font-weight:400;color:#1e293b;">Non</div>
<div class="r" style="left:370px;top:923px;width:112px;height:1px;background:#a9a9a9;"></div>
</body></html>
